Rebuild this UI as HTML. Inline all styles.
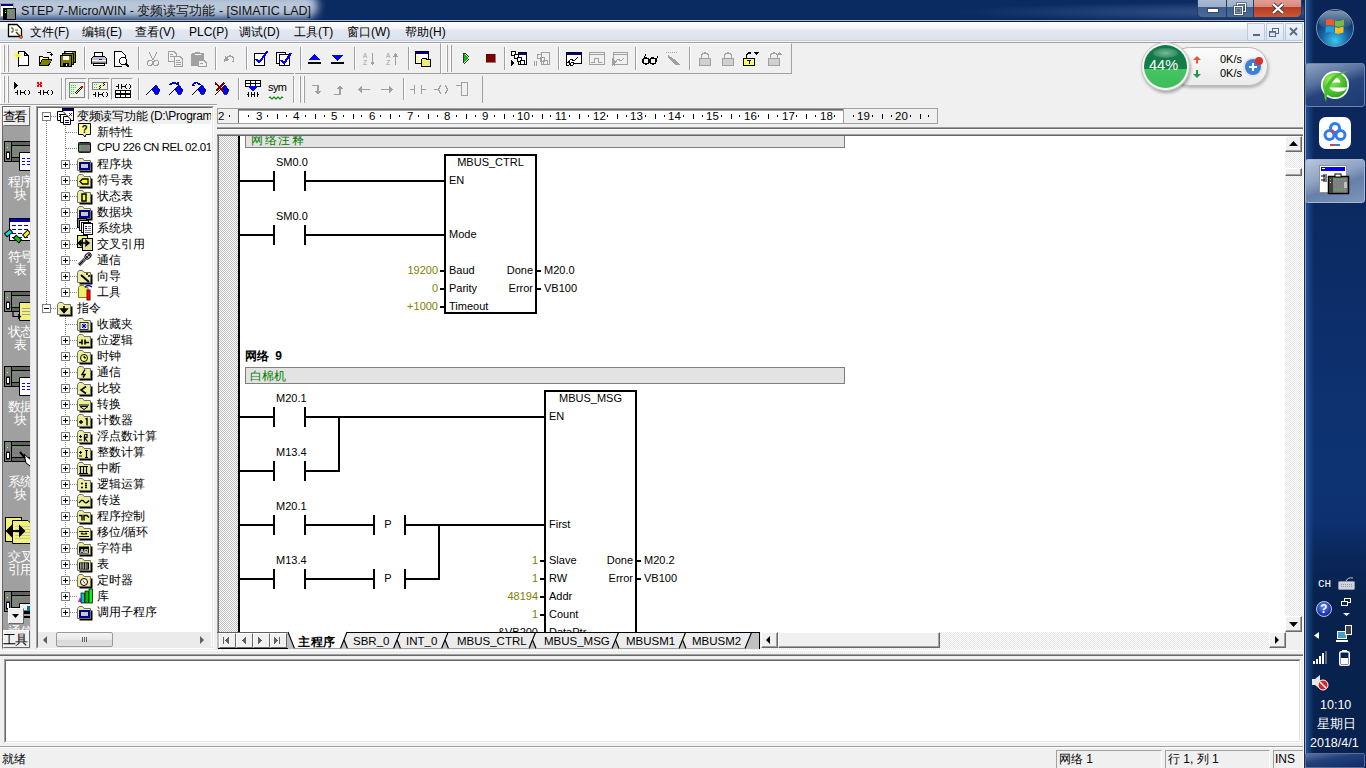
<!DOCTYPE html>
<html><head><meta charset="utf-8">
<style>
*{box-sizing:border-box}
html,body{margin:0;padding:0}
body{width:1366px;height:768px;overflow:hidden;position:relative;background:#f0f0f0;font-family:"Liberation Sans",sans-serif;font-size:12px;color:#000}
.a{position:absolute}
.t{position:absolute;white-space:nowrap;line-height:1}
svg{position:absolute;overflow:visible}
.lad{line-height:1}
.hatch{background:repeating-conic-gradient(#c0c0c0 0 25%,#ffffff 0 50%) 0 0/2px 2px}
</style></head><body>

<div class="a" style="left:0px;top:0px;width:1305px;height:20px;background:#0a2a62;"></div>
<div class="a" style="left:900px;top:0;width:420px;height:20px;background:radial-gradient(ellipse at 85% 60%,rgba(90,120,170,0.55),rgba(10,42,98,0) 60%)"></div>
<div class="a" style="left:-20px;top:-6px;width:338px;height:24px;border-radius:12px;background:#b9c7da;filter:blur(4px)"></div>
<div class="a" style="left:0px;top:20px;width:1305px;height:1px;background:#a2b5d2;"></div>
<div class="a" style="left:0px;top:21px;width:1305px;height:1px;background:#101b36;"></div>
<div class="t" style="left:21px;top:5px;font-size:12.5px;color:#111">STEP 7-Micro/WIN - 变频读写功能 - [SIMATIC LAD]</div>
<div class="a" style="left:0px;top:22px;width:1305px;height:18px;background:linear-gradient(#fdfdfe 0,#f3f5f9 35%,#e2e7f1 45%,#dde3ee 100%);"></div>
<div class="a" style="left:0px;top:40px;width:1305px;height:1px;background:#c8cfdc;"></div>
<div class="a" style="left:0px;top:41px;width:1305px;height:1px;background:#f4f4f4;"></div>
<div class="a" style="left:0px;top:42px;width:1305px;height:1px;background:#a0a0a0;"></div>
<div class="a" style="left:0px;top:43px;width:1305px;height:1px;background:#fff;"></div>
<div class="t" style="left:30px;top:26px;font-size:12px;">文件(F)</div>
<div class="t" style="left:82px;top:26px;font-size:12px;">编辑(E)</div>
<div class="t" style="left:135px;top:26px;font-size:12px;">查看(V)</div>
<div class="t" style="left:189px;top:26px;font-size:12px;">PLC(P)</div>
<div class="t" style="left:239px;top:26px;font-size:12px;">调试(D)</div>
<div class="t" style="left:294px;top:26px;font-size:12px;">工具(T)</div>
<div class="t" style="left:347px;top:26px;font-size:12px;">窗口(W)</div>
<div class="t" style="left:405px;top:26px;font-size:12px;">帮助(H)</div>
<div class="a" style="left:0px;top:43px;width:1305px;height:61px;background:#f0f0f0;"></div>
<div class="a" style="left:0px;top:43px;width:441px;height:31px;background:transparent;border-top:1px solid #fff;border-left:1px solid #fff;border-right:1px solid #a0a0a0;border-bottom:1px solid #a0a0a0"></div>
<div class="a" style="left:441px;top:43px;width:351px;height:31px;background:transparent;border-top:1px solid #fff;border-left:1px solid #fff;border-right:1px solid #a0a0a0;border-bottom:1px solid #a0a0a0"></div>
<div class="a" style="left:0px;top:73px;width:1px;height:31px;background:#fff;"></div>
<div class="a" style="left:293px;top:76px;width:1px;height:27px;background:#a0a0a0;"></div>
<div class="a" style="left:294px;top:73px;width:1px;height:31px;background:#fff;"></div>
<div class="a" style="left:482px;top:76px;width:1px;height:27px;background:#a0a0a0;"></div>
<div class="a" style="left:3px;top:45px;width:1px;height:27px;background:#fff;"></div>
<div class="a" style="left:4px;top:45px;width:1px;height:27px;background:#a0a0a0;"></div>
<div class="a" style="left:7px;top:45px;width:1px;height:27px;background:#fff;"></div>
<div class="a" style="left:8px;top:45px;width:1px;height:27px;background:#a0a0a0;"></div>
<div class="a" style="left:446px;top:45px;width:1px;height:27px;background:#fff;"></div>
<div class="a" style="left:447px;top:45px;width:1px;height:27px;background:#a0a0a0;"></div>
<div class="a" style="left:450px;top:45px;width:1px;height:27px;background:#fff;"></div>
<div class="a" style="left:451px;top:45px;width:1px;height:27px;background:#a0a0a0;"></div>
<div class="a" style="left:3px;top:76px;width:1px;height:27px;background:#fff;"></div>
<div class="a" style="left:4px;top:76px;width:1px;height:27px;background:#a0a0a0;"></div>
<div class="a" style="left:7px;top:76px;width:1px;height:27px;background:#fff;"></div>
<div class="a" style="left:8px;top:76px;width:1px;height:27px;background:#a0a0a0;"></div>
<div class="a" style="left:299px;top:76px;width:1px;height:27px;background:#fff;"></div>
<div class="a" style="left:300px;top:76px;width:1px;height:27px;background:#a0a0a0;"></div>
<div class="a" style="left:303px;top:76px;width:1px;height:27px;background:#fff;"></div>
<div class="a" style="left:304px;top:76px;width:1px;height:27px;background:#a0a0a0;"></div>
<svg style="left:14px;top:51px" width="16" height="16" viewBox="0 0 16 16" shape-rendering="crispEdges"><path d="M4 15.5 V0.5 H10 L14.5 5 V14.5 H3.5" fill="#fff" stroke="#000"/><path d="M10.5 0.5 V4.5 H14" fill="none" stroke="#000"/><path d="M0 4.5 H7 M3.5 1 V8 M1 2 L6 7 M6 2 L1 7" stroke="#ffff00" stroke-width="1"/><rect x="2" y="3" width="3" height="3" fill="#ffff00"/><rect x="3" y="4" width="1" height="1" fill="#c0c0c0"/></svg>
<svg style="left:38px;top:51px" width="16" height="16" viewBox="0 0 16 16" shape-rendering="crispEdges"><path d="M0.5 14.5 V4.5 H4 L5 5.5 H10.5 V7.5 H14.5 L11 14.5Z" fill="#000"/><path d="M1.5 13 V5.5 H4 L5 6.5 H9.5 V7.5 H4 Z" fill="#ffff80"/><path d="M2 13.5 L4.5 8.5 H14 L10.5 13.5Z" fill="#808000"/><path d="M8.5 2.5 Q11 0 13.5 2.5 V4" stroke="#000" fill="none"/><path d="M12 3 H15 L13.5 5Z" fill="#000"/></svg>
<svg style="left:60px;top:51px" width="16" height="16" viewBox="0 0 16 16" shape-rendering="crispEdges"><rect x="4.5" y="0.5" width="11" height="11" fill="#808000" stroke="#000"/><rect x="2.5" y="2.5" width="11" height="11" fill="#808000" stroke="#000"/><rect x="0.5" y="4.5" width="11" height="11" fill="#808000" stroke="#000"/><rect x="3" y="5" width="6" height="4" fill="#fff"/><rect x="3" y="12" width="6" height="3" fill="#000"/><rect x="6" y="13" width="1" height="2" fill="#fff"/><rect x="6" y="1" width="6" height="1" fill="#fff"/></svg>
<div class="a" style="left:84px;top:47px;width:1px;height:23px;background:#a0a0a0;"></div>
<div class="a" style="left:85px;top:47px;width:1px;height:23px;background:#fff;"></div>
<svg style="left:91px;top:51px" width="16" height="16" viewBox="0 0 16 16" shape-rendering="crispEdges"><path d="M3.5 5.5 V1.5 H11.5 V5.5" fill="#fff" stroke="#000"/><path d="M0.5 7.5 L2.5 5.5 H13.5 L15.5 7.5 V12.5 H0.5Z" fill="#c0c0c0" stroke="#000"/><path d="M1 9.5 H15" stroke="#fff"/><rect x="1" y="11" width="14" height="2" fill="#808080"/><rect x="2.5" y="12.5" width="11" height="2" fill="#fff" stroke="#000"/><rect x="8" y="8" width="3" height="1" fill="#0000ff"/></svg>
<svg style="left:114px;top:51px" width="16" height="16" viewBox="0 0 16 16" shape-rendering="crispEdges"><path d="M0.5 15.5 V0.5 H7.5 L11.5 4.5 V8" fill="#fff" stroke="#000"/><path d="M0.5 15.5 H8" stroke="#000"/><circle cx="9" cy="10" r="3.5" fill="#fff" stroke="#000"/><path d="M11.5 12.5 L15 16" stroke="#000" stroke-width="2"/></svg>
<div class="a" style="left:138px;top:47px;width:1px;height:23px;background:#a0a0a0;"></div>
<div class="a" style="left:139px;top:47px;width:1px;height:23px;background:#fff;"></div>
<svg style="left:145px;top:51px" width="16" height="16" viewBox="0 0 16 16" shape-rendering="crispEdges"><path d="M4 1 L8 9 M12 1 L8 9" stroke="#a0a0a0"/><circle cx="5" cy="12" r="2.5" fill="none" stroke="#a0a0a0"/><circle cx="11" cy="12" r="2.5" fill="none" stroke="#a0a0a0"/></svg>
<svg style="left:168px;top:51px" width="16" height="16" viewBox="0 0 16 16" shape-rendering="crispEdges"><path d="M0.5 0.5 H6 L8.5 3 V10.5 H0.5Z" fill="#f0f0f0" stroke="#a0a0a0"/><path d="M6.5 5.5 H12 L14.5 8 V15.5 H6.5Z" fill="#f0f0f0" stroke="#a0a0a0"/><path d="M2 3.5 H5 M2 5.5 H6 M8 9.5 H12 M8 11.5 H13 M8 13.5 H13" stroke="#a0a0a0"/></svg>
<svg style="left:191px;top:51px" width="16" height="16" viewBox="0 0 16 16" shape-rendering="crispEdges"><rect x="0.5" y="2.5" width="12" height="12" rx="1.5" fill="#a0a0a0" stroke="#a0a0a0"/><rect x="4" y="1" width="5" height="3" fill="#a0a0a0"/><rect x="4" y="3" width="6" height="1" fill="#fff"/><path d="M7.5 9.5 H13 L15.5 12 V15.5 H7.5Z" fill="#f0f0f0" stroke="#a0a0a0"/><path d="M9 12.5 H12" stroke="#a0a0a0"/></svg>
<div class="a" style="left:215px;top:47px;width:1px;height:23px;background:#a0a0a0;"></div>
<div class="a" style="left:216px;top:47px;width:1px;height:23px;background:#fff;"></div>
<svg style="left:222px;top:51px" width="16" height="16" viewBox="0 0 16 16" shape-rendering="crispEdges"><path d="M4 8 Q6 4 10 5.5 Q13 7 11 11" stroke="#a0a0a0" stroke-width="1.5" fill="none"/><path d="M2 11 L3 5 L7 9Z" fill="#a0a0a0"/></svg>
<div class="a" style="left:246px;top:47px;width:1px;height:23px;background:#a0a0a0;"></div>
<div class="a" style="left:247px;top:47px;width:1px;height:23px;background:#fff;"></div>
<svg style="left:253px;top:51px" width="16" height="16" viewBox="0 0 16 16" shape-rendering="crispEdges"><rect x="1.5" y="2.5" width="10" height="12" fill="#fff" stroke="#000" stroke-width="1"/><path d="M3 8 L6 11.5 L14.5 0.5" stroke="#0000ff" stroke-width="2" fill="none"/></svg>
<svg style="left:276px;top:51px" width="16" height="16" viewBox="0 0 16 16" shape-rendering="crispEdges"><rect x="0.5" y="1.5" width="9" height="11" fill="#fff" stroke="#000"/><rect x="3.5" y="3.5" width="10" height="11" fill="#fff" stroke="#000"/><path d="M5 9 L8 12.5 L15 2" stroke="#0000ff" stroke-width="2" fill="none"/></svg>
<div class="a" style="left:300px;top:47px;width:1px;height:23px;background:#a0a0a0;"></div>
<div class="a" style="left:301px;top:47px;width:1px;height:23px;background:#fff;"></div>
<svg style="left:307px;top:51px" width="16" height="16" viewBox="0 0 16 16" shape-rendering="crispEdges"><path d="M2 9 L7.5 3 L13 9Z" fill="#0000ff"/><rect x="1" y="11" width="13" height="2" fill="#000"/></svg>
<svg style="left:330px;top:51px" width="16" height="16" viewBox="0 0 16 16" shape-rendering="crispEdges"><path d="M2 4 L7.5 10 L13 4Z" fill="#0000ff"/><rect x="1" y="11" width="13" height="2" fill="#000"/></svg>
<div class="a" style="left:354px;top:47px;width:1px;height:23px;background:#a0a0a0;"></div>
<div class="a" style="left:355px;top:47px;width:1px;height:23px;background:#fff;"></div>
<svg style="left:361px;top:51px" width="16" height="16" viewBox="0 0 16 16" shape-rendering="crispEdges"><text x="4" y="6.5" font-size="7" fill="#a0a0a0" font-family="Liberation Mono" text-anchor="middle">A</text><text x="4" y="14" font-size="7" fill="#a0a0a0" font-family="Liberation Mono" text-anchor="middle">Z</text><path d="M11.5 2 V13" stroke="#a0a0a0" stroke-width="1.4"/><path d="M9 10.5 L11.5 14 L14 10.5Z" fill="#a0a0a0"/></svg>
<svg style="left:384px;top:51px" width="16" height="16" viewBox="0 0 16 16" shape-rendering="crispEdges"><text x="4" y="6.5" font-size="7" fill="#a0a0a0" font-family="Liberation Mono" text-anchor="middle">A</text><text x="4" y="14" font-size="7" fill="#a0a0a0" font-family="Liberation Mono" text-anchor="middle">Z</text><path d="M11.5 3 V14" stroke="#a0a0a0" stroke-width="1.4"/><path d="M9 5.5 L11.5 2 L14 5.5Z" fill="#a0a0a0"/></svg>
<div class="a" style="left:408px;top:47px;width:1px;height:23px;background:#a0a0a0;"></div>
<div class="a" style="left:409px;top:47px;width:1px;height:23px;background:#fff;"></div>
<svg style="left:415px;top:51px" width="16" height="16" viewBox="0 0 16 16" shape-rendering="crispEdges"><rect x="0.5" y="0.5" width="13" height="12" fill="#fff" stroke="#000"/><rect x="1" y="1" width="12" height="2" fill="#000080"/><rect x="2" y="4" width="2" height="8" fill="#ffff80"/><path d="M6.5 14.5 V8.5 L8 7 H11 L12 8.5 H15.5 V15.5 H6.5Z" fill="#eeee70" stroke="#000"/></svg>
<svg style="left:460px;top:51px" width="16" height="16" viewBox="0 0 16 16" shape-rendering="crispEdges"><path d="M3.5 2 V12 L9 7Z" fill="#00c000" stroke="#000" stroke-width="0.8"/></svg>
<svg style="left:483px;top:51px" width="16" height="16" viewBox="0 0 16 16" shape-rendering="crispEdges"><rect x="3" y="3" width="9" height="8" fill="#800000" stroke="#400000" stroke-width="0.5"/></svg>
<div class="a" style="left:504px;top:47px;width:1px;height:23px;background:#a0a0a0;"></div>
<div class="a" style="left:505px;top:47px;width:1px;height:23px;background:#fff;"></div>
<svg style="left:511px;top:51px" width="16" height="16" viewBox="0 0 16 16" shape-rendering="crispEdges"><rect x="7.5" y="1.5" width="8" height="12" fill="#fff" stroke="#000"/><rect x="8" y="2" width="7" height="2" fill="#000080"/><rect x="0.5" y="0.5" width="4" height="4" fill="#fff" stroke="#000"/><rect x="3.5" y="3.5" width="4" height="4" fill="#fff" stroke="#000"/><rect x="6.5" y="6.5" width="4" height="4" fill="#fff" stroke="#000"/><rect x="9.5" y="9.5" width="4" height="4" fill="#fff" stroke="#000"/><path d="M0 9 L3 12 L0 15Z" fill="#000"/></svg>
<svg style="left:534px;top:51px" width="16" height="16" viewBox="0 0 16 16" shape-rendering="crispEdges"><rect x="7.5" y="1.5" width="8" height="12" fill="none" stroke="#a0a0a0"/><rect x="3.5" y="3.5" width="4" height="4" fill="none" stroke="#a0a0a0"/><rect x="6.5" y="6.5" width="4" height="4" fill="none" stroke="#a0a0a0"/><rect x="9.5" y="9.5" width="4" height="4" fill="none" stroke="#a0a0a0"/><path d="M0.5 10 V15 M2.5 10 V15" stroke="#a0a0a0"/></svg>
<div class="a" style="left:558px;top:47px;width:1px;height:23px;background:#a0a0a0;"></div>
<div class="a" style="left:559px;top:47px;width:1px;height:23px;background:#fff;"></div>
<svg style="left:566px;top:51px" width="16" height="16" viewBox="0 0 16 16" shape-rendering="crispEdges"><rect x="0.5" y="1.5" width="15" height="11" fill="#fff" stroke="#000"/><rect x="1" y="2" width="14" height="2" fill="#000080"/><path d="M2 12 L5 8 L8 10 L12 6" stroke="#000" fill="none"/><circle cx="2" cy="13" r="1.5" fill="#fff" stroke="#000"/><circle cx="6" cy="13" r="1.5" fill="#fff" stroke="#000"/></svg>
<svg style="left:589px;top:51px" width="16" height="16" viewBox="0 0 16 16" shape-rendering="crispEdges"><rect x="0.5" y="1.5" width="15" height="12" fill="none" stroke="#a0a0a0"/><path d="M1 3.5 H15" stroke="#a0a0a0"/><path d="M2 11 H5 V7 H9 V11 H13" stroke="#a0a0a0" fill="none"/></svg>
<svg style="left:612px;top:51px" width="16" height="16" viewBox="0 0 16 16" shape-rendering="crispEdges"><rect x="1.5" y="1.5" width="14" height="12" fill="none" stroke="#a0a0a0"/><path d="M1 3.5 H15" stroke="#a0a0a0"/><path d="M3 12 L6 8 L9 10 L12 7" stroke="#a0a0a0" fill="none"/><path d="M0.5 7 V15 M2.5 9 V15" stroke="#a0a0a0"/></svg>
<div class="a" style="left:635px;top:47px;width:1px;height:23px;background:#a0a0a0;"></div>
<div class="a" style="left:636px;top:47px;width:1px;height:23px;background:#fff;"></div>
<svg style="left:642px;top:51px" width="16" height="16" viewBox="0 0 16 16" shape-rendering="crispEdges"><circle cx="4" cy="10" r="3" fill="none" stroke="#000" stroke-width="1.4"/><circle cx="11" cy="10" r="3" fill="none" stroke="#000" stroke-width="1.4"/><path d="M7 9 H8 M1 9 L4 3 M14 9 L16 5" stroke="#000" stroke-width="1.2"/></svg>
<svg style="left:665px;top:51px" width="16" height="16" viewBox="0 0 16 16" shape-rendering="crispEdges"><path d="M1 1.5 H12" stroke="#a0a0a0" stroke-dasharray="1 1"/><path d="M3 4 L12 10 L15 14 L10 14 L3 6Z" fill="#a0a0a0"/></svg>
<div class="a" style="left:689px;top:47px;width:1px;height:23px;background:#a0a0a0;"></div>
<div class="a" style="left:690px;top:47px;width:1px;height:23px;background:#fff;"></div>
<svg style="left:697px;top:51px" width="16" height="16" viewBox="0 0 16 16" shape-rendering="crispEdges"><path d="M4.5 7 V4 Q8 0 11.5 4 V7" stroke="#a0a0a0" stroke-width="1.5" fill="none"/><rect x="2.5" y="7.5" width="11" height="7" fill="#d0d0d0" stroke="#a0a0a0"/></svg>
<svg style="left:720px;top:51px" width="16" height="16" viewBox="0 0 16 16" shape-rendering="crispEdges"><path d="M4.5 7 V4 Q8 0 11.5 4 V7" stroke="#a0a0a0" stroke-width="1.5" fill="none"/><rect x="2.5" y="7.5" width="11" height="7" fill="#d0d0d0" stroke="#a0a0a0"/></svg>
<svg style="left:743px;top:51px" width="16" height="16" viewBox="0 0 16 16" shape-rendering="crispEdges"><path d="M3.5 7 V4 Q5 1 8 2" stroke="#000" stroke-width="1.5" fill="none"/><rect x="0.5" y="7.5" width="11" height="7" fill="#ffff60" stroke="#000"/><path d="M4 9.5 H8 M6 9.5 V13" stroke="#000"/><path d="M10 1 H16 L13 4Z" fill="#000"/></svg>
<svg style="left:766px;top:51px" width="16" height="16" viewBox="0 0 16 16" shape-rendering="crispEdges"><path d="M4.5 7 V4 Q8 0 11.5 4 V7" stroke="#a0a0a0" stroke-width="1.5" fill="none"/><rect x="2.5" y="7.5" width="11" height="7" fill="#d0d0d0" stroke="#a0a0a0"/><path d="M11 4 L13.5 1 L16 4Z" fill="#a0a0a0"/></svg>
<svg style="left:14px;top:82px" width="16" height="16" viewBox="0 0 16 16" shape-rendering="crispEdges"><path d="M0 0 V7 L4 3.5Z" fill="#000"/><g fill="#000"><rect x="1" y="10" width="2" height="1"/><rect x="3" y="8" width="1" height="5"/><rect x="6" y="8" width="1" height="5"/><rect x="7" y="10" width="3" height="1"/><rect x="10" y="9" width="1" height="3"/><rect x="11" y="8" width="1" height="1"/><rect x="11" y="12" width="1" height="1"/><rect x="15" y="9" width="1" height="3"/><rect x="14" y="8" width="1" height="1"/><rect x="14" y="12" width="1" height="1"/></g></svg>
<svg style="left:37px;top:82px" width="16" height="16" viewBox="0 0 16 16" shape-rendering="crispEdges"><g fill="#ff0000"><rect x="0" y="0" width="2" height="2"/><rect x="3" y="0" width="2" height="2"/><rect x="1" y="2" width="3" height="1"/><rect x="0" y="3" width="2" height="2"/><rect x="3" y="3" width="2" height="2"/></g><g fill="#000"><rect x="1" y="10" width="2" height="1"/><rect x="3" y="8" width="1" height="5"/><rect x="6" y="8" width="1" height="5"/><rect x="7" y="10" width="3" height="1"/><rect x="10" y="9" width="1" height="3"/><rect x="11" y="8" width="1" height="1"/><rect x="11" y="12" width="1" height="1"/><rect x="15" y="9" width="1" height="3"/><rect x="14" y="8" width="1" height="1"/><rect x="14" y="12" width="1" height="1"/></g></svg>
<div class="a" style="left:61px;top:78px;width:1px;height:22px;background:#a0a0a0;"></div>
<div class="a" style="left:62px;top:78px;width:1px;height:22px;background:#fff;"></div>
<div class="a" style="left:65px;top:78px;width:22px;height:22px;background:repeating-conic-gradient(#f8f8f8 0 25%,#e8e8e8 0 50%) 0 0/2px 2px;border:1px solid #a0a0a0;border-right-color:#fff;border-bottom-color:#fff"></div>
<div class="a" style="left:88px;top:78px;width:22px;height:22px;background:repeating-conic-gradient(#f8f8f8 0 25%,#e8e8e8 0 50%) 0 0/2px 2px;border:1px solid #a0a0a0;border-right-color:#fff;border-bottom-color:#fff"></div>
<div class="a" style="left:111px;top:78px;width:22px;height:22px;background:repeating-conic-gradient(#f8f8f8 0 25%,#e8e8e8 0 50%) 0 0/2px 2px;border:1px solid #a0a0a0;border-right-color:#fff;border-bottom-color:#fff"></div>
<svg style="left:69px;top:82px" width="16" height="16" viewBox="0 0 16 16" shape-rendering="crispEdges"><rect x="0.5" y="0.5" width="15" height="15" fill="#f0f0f0" stroke="#808080"/><path d="M2 3.5 H3 M4 3.5 H5 M6 3.5 H7 M2 5.5 H3 M4 5.5 H5 M6 5.5 H7 M2 7.5 H3 M4 7.5 H5 M2 9.5 H3 M4 9.5 H5 M2 11.5 H3 M4 11.5 H5 M6 11.5 H7" stroke="#00ff00"/><path d="M6 12 L13 5" stroke="#000" stroke-width="2.2"/><path d="M6 12 L13 5" stroke="#ffff00" stroke-width="1.2"/><rect x="12" y="4" width="2" height="2" fill="#ff0000"/></svg>
<svg style="left:92px;top:82px" width="16" height="18" viewBox="0 0 16 18" shape-rendering="crispEdges"><rect x="0.5" y="0.5" width="15" height="7" fill="#f0f0f0" stroke="#808080"/><path d="M2 2.5 H3 M4 2.5 H5 M2 5.5 H3 M4 5.5 H5" stroke="#00ff00"/><path d="M7 6 L13 1" stroke="#000" stroke-width="2"/><path d="M7 6 L13 1" stroke="#ffff00" stroke-width="1"/><g transform="translate(0,2)"><g fill="#000"><rect x="1" y="10" width="2" height="1"/><rect x="3" y="8" width="1" height="5"/><rect x="6" y="8" width="1" height="5"/><rect x="7" y="10" width="3" height="1"/><rect x="10" y="9" width="1" height="3"/><rect x="11" y="8" width="1" height="1"/><rect x="11" y="12" width="1" height="1"/><rect x="15" y="9" width="1" height="3"/><rect x="14" y="8" width="1" height="1"/><rect x="14" y="12" width="1" height="1"/></g></g></svg>
<svg style="left:115px;top:82px" width="16" height="16" viewBox="0 0 16 16" shape-rendering="crispEdges"><g transform="translate(0,-6)"><g fill="#000"><rect x="1" y="10" width="2" height="1"/><rect x="3" y="8" width="1" height="5"/><rect x="6" y="8" width="1" height="5"/><rect x="7" y="10" width="3" height="1"/><rect x="10" y="9" width="1" height="3"/><rect x="11" y="8" width="1" height="1"/><rect x="11" y="12" width="1" height="1"/><rect x="15" y="9" width="1" height="3"/><rect x="14" y="8" width="1" height="1"/><rect x="14" y="12" width="1" height="1"/></g></g><rect x="0.5" y="8.5" width="15" height="7" fill="#fff" stroke="#000" stroke-width="1.2"/><path d="M0 12 H16 M5.5 8 V16 M10.5 8 V16" stroke="#000" stroke-width="1.2"/></svg>
<div class="a" style="left:138px;top:78px;width:1px;height:22px;background:#a0a0a0;"></div>
<div class="a" style="left:139px;top:78px;width:1px;height:22px;background:#fff;"></div>
<svg style="left:145px;top:82px" width="17" height="15" viewBox="0 0 17 15" shape-rendering="crispEdges"><path d="M0.5 13.5 L11 3" stroke="#000" stroke-width="1.2"/><path d="M7 7 L11 3 L15 8 L13 12 L10 12Z" fill="#0000ff" stroke="#000080" stroke-width="0.8"/></svg>
<svg style="left:168px;top:82px" width="17" height="15" viewBox="0 0 17 15" shape-rendering="crispEdges"><path d="M0.5 13.5 L11 3" stroke="#000" stroke-width="1.2"/><path d="M7 7 L11 3 L15 8 L13 12 L10 12Z" fill="#0000ff" stroke="#000080" stroke-width="0.8"/><path d="M2 3 Q5 -1 9 2" stroke="#0000c0" stroke-width="1.5" fill="none"/><path d="M7.5 1 L10.5 4 L10.5 0Z" fill="#0000c0"/></svg>
<svg style="left:191px;top:82px" width="17" height="15" viewBox="0 0 17 15" shape-rendering="crispEdges"><path d="M0.5 13.5 L11 3" stroke="#000" stroke-width="1.2"/><path d="M7 7 L11 3 L15 8 L13 12 L10 12Z" fill="#0000ff" stroke="#000080" stroke-width="0.8"/><path d="M9 3 Q6 -1 2 2" stroke="#0000c0" stroke-width="1.5" fill="none"/><path d="M0.5 4 L4 3.5 L2 0.5Z" fill="#0000c0"/></svg>
<svg style="left:214px;top:82px" width="17" height="15" viewBox="0 0 17 15" shape-rendering="crispEdges"><path d="M0.5 13.5 L11 3" stroke="#000" stroke-width="1.2"/><path d="M7 7 L11 3 L15 8 L13 12 L10 12Z" fill="#0000ff" stroke="#000080" stroke-width="0.8"/><path d="M1 1 L10 9 M10 1 L2 9" stroke="#800000" stroke-width="1.6"/></svg>
<div class="a" style="left:238px;top:78px;width:1px;height:22px;background:#a0a0a0;"></div>
<div class="a" style="left:239px;top:78px;width:1px;height:22px;background:#fff;"></div>
<svg style="left:245px;top:80px" width="16" height="17" viewBox="0 0 16 17" shape-rendering="crispEdges"><rect x="0.5" y="0.5" width="15" height="6" fill="#fff" stroke="#000" stroke-width="1.2"/><path d="M0 3.5 H16 M5.5 0 V7 M10.5 0 V7" stroke="#000"/><path d="M2 6 H14 L8 11Z" fill="#0000ff"/><path d="M2 14.5 H3 M3.5 12 V17 M6.5 12 V17 M7 14.5 H8 M10 12 L9 14.5 L10 17 M12 12 L13 14.5 L12 17" stroke="#000" stroke-width="1.2" fill="none"/></svg>
<div class="t" style="left:268px;top:82px;font-size:11px;letter-spacing:-0.6px">sym</div>
<svg style="left:269px;top:96px" width="14" height="3"><path d="M0 2 Q1 0 2 2 T4 2 T6 2 T8 2 T10 2 T12 2 T14 2" stroke="#008000" stroke-width="1.2" fill="none"/></svg>
<svg style="left:312px;top:84px" width="12" height="12" viewBox="0 0 12 12" shape-rendering="crispEdges"><path d="M0 1.5 H6 V9" stroke="#a0a0a0" stroke-width="1.5" fill="none"/><path d="M2.5 7 L6 11 L9.5 7Z" fill="#a0a0a0"/></svg>
<svg style="left:334px;top:84px" width="14" height="12" viewBox="0 0 14 12" shape-rendering="crispEdges"><path d="M0 10.5 H6 V3" stroke="#a0a0a0" stroke-width="1.5" fill="none"/><path d="M2.5 5 L6 1 L9.5 5Z" fill="#a0a0a0"/></svg>
<svg style="left:358px;top:84px" width="13" height="12" viewBox="0 0 13 12" shape-rendering="crispEdges"><path d="M3 5.5 H12" stroke="#a0a0a0" stroke-width="1.5"/><path d="M0 5.5 L4 2 V9Z" fill="#a0a0a0"/></svg>
<svg style="left:381px;top:84px" width="13" height="12" viewBox="0 0 13 12" shape-rendering="crispEdges"><path d="M0 5.5 H9" stroke="#a0a0a0" stroke-width="1.5"/><path d="M12 5.5 L8 2 V9Z" fill="#a0a0a0"/></svg>
<div class="a" style="left:403px;top:78px;width:1px;height:22px;background:#a0a0a0;"></div>
<div class="a" style="left:404px;top:78px;width:1px;height:22px;background:#fff;"></div>
<svg style="left:410px;top:84px" width="16" height="12" viewBox="0 0 16 12" shape-rendering="crispEdges"><path d="M0 5.5 H4 M4.5 1 V10 M11.5 1 V10 M12 5.5 H16" stroke="#a0a0a0" stroke-width="1.3"/></svg>
<svg style="left:434px;top:84px" width="15" height="12" viewBox="0 0 15 12" shape-rendering="crispEdges"><path d="M0 5.5 H4 M7 1 L4.5 5.5 L7 10 M11 1 L13.5 5.5 L11 10" stroke="#a0a0a0" stroke-width="1.3" fill="none"/></svg>
<svg style="left:456px;top:82px" width="13" height="15" viewBox="0 0 13 15" shape-rendering="crispEdges"><path d="M0 3.5 H5" stroke="#a0a0a0" stroke-width="1.3"/><rect x="5.5" y="0.5" width="6" height="13" fill="none" stroke="#a0a0a0" stroke-width="1.2"/></svg>
<div class="a" style="left:0px;top:104px;width:217px;height:1px;background:#a0a0a0;"></div>
<div class="a" style="left:0px;top:105px;width:217px;height:1px;background:#fff;"></div>
<div class="a" style="left:2px;top:106px;width:29px;height:543px;border:1px solid #696969;border-right-color:#e3e3e3;border-bottom-color:#e3e3e3;background:#a0a0a0"></div>
<div class="a" style="left:3px;top:107px;width:27px;height:19px;background:#f0f0f0;border-right:1px solid #696969;border-bottom:1px solid #696969;border-top:1px solid #fff;border-left:1px solid #fff"></div>
<div class="t" style="left:3px;top:110px;font-size:13px;letter-spacing:-2.5px;color:#000">查看</div>
<div class="a" style="left:36px;top:106px;width:178px;height:543px;border:1px solid #a0a0a0;border-right-color:#fff;border-bottom-color:#fff;"></div>
<div class="a" style="left:37px;top:107px;width:176px;height:541px;border:1px solid #696969;border-right-color:#e3e3e3;border-bottom-color:#e3e3e3;background:#fff"></div>
<div class="a" style="left:3px;top:126px;width:27px;height:522px;overflow:hidden"><div class="a" style="left:-3px;top:-126px;width:400px;height:768px">
<svg style="left:4px;top:141px" width="32" height="32" viewBox="0 0 32 32"><rect x="0.5" y="0.5" width="30" height="20" fill="#808080" stroke="#000"/><rect x="1" y="1" width="6" height="19" fill="#808080"/><path d="M7.5 1 V20" stroke="#000"/><rect x="2" y="10.5" width="4" height="8" fill="#000"/><rect x="3" y="12" width="2" height="5" fill="#fff"/><rect x="3" y="3" width="1" height="1" fill="#00ff00"/><rect x="3" y="6" width="1" height="1" fill="#ffff00"/><rect x="8" y="1" width="22" height="3" fill="#606060"/><rect x="8" y="16" width="22" height="4" fill="#606060"/><path d="M8 16.5 H30" stroke="#000"/><path d="M8 4.5 H30" stroke="#000"/><path d="M10 6.5 H18" stroke="#00ff00" stroke-dasharray="1 2"/><path d="M10 14.5 H14" stroke="#00ff00" stroke-dasharray="1 2"/><path d="M15.5 11.5 H26 L30 15 V29.5 H15.5Z" fill="#fff" stroke="#000"/><path d="M18 17.5 H21 M23 17.5 H26 M18 20.5 H21 M23 20.5 H26 M18 23.5 H21 M23 23.5 H26" stroke="#0000ff"/></svg>
<svg style="left:4px;top:216px" width="32" height="32" viewBox="0 0 32 32"><rect x="5.5" y="2.5" width="26" height="22" fill="#fff" stroke="#000"/><rect x="6" y="3" width="25" height="3" fill="#0000c0"/><path d="M8 9.5 H12 M14 9.5 H18 M20 9.5 H24 M26 9.5 H30 M8 13.5 H12 M14 13.5 H18 M20 13.5 H24 M26 13.5 H30 M8 17.5 H12 M14 17.5 H18 M20 17.5 H24 M26 17.5 H30 M8 21.5 H12 M14 21.5 H18 M20 21.5 H24 M26 21.5 H30" stroke="#0000c0"/><rect x="1" y="15" width="7" height="4" transform="rotate(-40 4.5 17)" fill="#00e0e0" stroke="#000"/><rect x="10" y="21" width="7" height="4" transform="rotate(40 13.5 23)" fill="#00d000" stroke="#000"/><rect x="19" y="16" width="7" height="4" transform="rotate(-45 22.5 18)" fill="#f0f000" stroke="#000"/></svg>
<svg style="left:4px;top:291px" width="32" height="32" viewBox="0 0 32 32"><rect x="0.5" y="0.5" width="30" height="20" fill="#808080" stroke="#000"/><rect x="1" y="1" width="6" height="19" fill="#808080"/><path d="M7.5 1 V20" stroke="#000"/><rect x="2" y="10.5" width="4" height="8" fill="#000"/><rect x="3" y="12" width="2" height="5" fill="#fff"/><rect x="3" y="3" width="1" height="1" fill="#00ff00"/><rect x="3" y="6" width="1" height="1" fill="#ffff00"/><rect x="8" y="1" width="22" height="3" fill="#606060"/><rect x="8" y="16" width="22" height="4" fill="#606060"/><path d="M8 16.5 H30" stroke="#000"/><path d="M8 4.5 H30" stroke="#000"/><path d="M10 6.5 H18" stroke="#00ff00" stroke-dasharray="1 2"/><path d="M10 14.5 H14" stroke="#00ff00" stroke-dasharray="1 2"/><path d="M15.5 11.5 H26 L30 15 V29.5 H15.5Z" fill="#f2f27a" stroke="#000"/><path d="M18 17.5 H26 M18 20.5 H26 M18 23.5 H26" stroke="#a0a0a0"/><path d="M9 21 V25.5 H16 M14 23.5 L16.5 25.5 L14 27.5" stroke="#000" stroke-width="1.2" fill="none"/></svg>
<svg style="left:4px;top:366px" width="32" height="32" viewBox="0 0 32 32"><rect x="0.5" y="0.5" width="30" height="20" fill="#808080" stroke="#000"/><rect x="1" y="1" width="6" height="19" fill="#808080"/><path d="M7.5 1 V20" stroke="#000"/><rect x="2" y="10.5" width="4" height="8" fill="#000"/><rect x="3" y="12" width="2" height="5" fill="#fff"/><rect x="3" y="3" width="1" height="1" fill="#00ff00"/><rect x="3" y="6" width="1" height="1" fill="#ffff00"/><rect x="8" y="1" width="22" height="3" fill="#606060"/><rect x="8" y="16" width="22" height="4" fill="#606060"/><path d="M8 16.5 H30" stroke="#000"/><path d="M8 4.5 H30" stroke="#000"/><path d="M10 6.5 H18" stroke="#00ff00" stroke-dasharray="1 2"/><path d="M10 14.5 H14" stroke="#00ff00" stroke-dasharray="1 2"/><path d="M15.5 11.5 H26 L30 15 V29.5 H15.5Z" fill="#fff" stroke="#000"/><path d="M18 17.5 H21 M23 17.5 H26 M18 20.5 H21 M23 20.5 H26 M18 23.5 H21 M23 23.5 H26" stroke="#0000ff"/></svg>
<svg style="left:4px;top:441px" width="32" height="32" viewBox="0 0 32 32"><rect x="0.5" y="0.5" width="30" height="20" fill="#808080" stroke="#000"/><rect x="1" y="1" width="6" height="19" fill="#808080"/><path d="M7.5 1 V20" stroke="#000"/><rect x="2" y="10.5" width="4" height="8" fill="#000"/><rect x="3" y="12" width="2" height="5" fill="#fff"/><rect x="3" y="3" width="1" height="1" fill="#00ff00"/><rect x="3" y="6" width="1" height="1" fill="#ffff00"/><rect x="8" y="1" width="22" height="3" fill="#606060"/><rect x="8" y="16" width="22" height="4" fill="#606060"/><path d="M8 16.5 H30" stroke="#000"/><path d="M8 4.5 H30" stroke="#000"/><path d="M10 6.5 H18" stroke="#00ff00" stroke-dasharray="1 2"/><path d="M10 14.5 H14" stroke="#00ff00" stroke-dasharray="1 2"/><path d="M20 13 L28 20 L26 25 L22 22Z" fill="#fff" stroke="#000"/><path d="M16 11 L21 17" stroke="#000" stroke-width="2"/><path d="M27 24 L31 30" stroke="#d07000" stroke-width="1.5"/></svg>
<svg style="left:4px;top:516px" width="32" height="32" viewBox="0 0 32 32"><rect x="1.5" y="1.5" width="16" height="24" fill="#f2f27a" stroke="#000"/><path d="M8.5 4.5 H24 L28 8.5 V27.5 H8.5Z" fill="#f2f27a" stroke="#000"/><path d="M11 10.5 H26 M11 13.5 H26 M11 16.5 H26 M11 19.5 H26 M11 22.5 H26" stroke="#c8c8a0"/><path d="M3 15 H20 M3 15 L7 11 V19Z M20 15 L16 11 V19Z" stroke="#000" stroke-width="2" fill="#000"/></svg>
<svg style="left:4px;top:591px" width="32" height="32" viewBox="0 0 32 32"><rect x="0.5" y="0.5" width="30" height="20" fill="#808080" stroke="#000"/><rect x="1" y="1" width="6" height="19" fill="#808080"/><path d="M7.5 1 V20" stroke="#000"/><rect x="2" y="10.5" width="4" height="8" fill="#000"/><rect x="3" y="12" width="2" height="5" fill="#fff"/><rect x="3" y="3" width="1" height="1" fill="#00ff00"/><rect x="3" y="6" width="1" height="1" fill="#ffff00"/><rect x="8" y="1" width="22" height="3" fill="#606060"/><rect x="8" y="16" width="22" height="4" fill="#606060"/><path d="M8 16.5 H30" stroke="#000"/><path d="M8 4.5 H30" stroke="#000"/><path d="M10 6.5 H18" stroke="#00ff00" stroke-dasharray="1 2"/><path d="M10 14.5 H14" stroke="#00ff00" stroke-dasharray="1 2"/><path d="M15.5 12.5 H31 V20 H15.5Z" fill="#f0f0f0" stroke="#000"/><rect x="23" y="15" width="8" height="5" fill="#008080"/><path d="M6 22 H30 M6 26 H30" stroke="#000" stroke-width="2"/></svg>
<div class="t" style="left:-20px;width:80px;text-align:center;top:175px;font-size:13px;color:#fff;line-height:13px;letter-spacing:-0.5px">程序<br>块</div>
<div class="t" style="left:-20px;width:80px;text-align:center;top:250px;font-size:13px;color:#fff;line-height:13px;letter-spacing:-0.5px">符号<br>表</div>
<div class="t" style="left:-20px;width:80px;text-align:center;top:325px;font-size:13px;color:#fff;line-height:13px;letter-spacing:-0.5px">状态<br>表</div>
<div class="t" style="left:-20px;width:80px;text-align:center;top:400px;font-size:13px;color:#fff;line-height:13px;letter-spacing:-0.5px">数据<br>块</div>
<div class="t" style="left:-20px;width:80px;text-align:center;top:475px;font-size:13px;color:#fff;line-height:13px;letter-spacing:-0.5px">系统<br>块</div>
<div class="t" style="left:-20px;width:80px;text-align:center;top:550px;font-size:13px;color:#fff;line-height:13px;letter-spacing:-0.5px">交叉<br>引用</div>
<div class="t" style="left:-20px;width:80px;text-align:center;top:625px;font-size:13px;color:#fff;line-height:13px;letter-spacing:-0.5px">通信<br></div>
</div></div>
<div class="a" style="left:8px;top:608px;width:16px;height:16px;background:#f0f0f0;border:1px solid #fff;border-right-color:#696969;border-bottom-color:#696969"></div>
<svg style="left:12px;top:614px" width="8" height="4"><path d="M0 0 H7 L3.5 4Z" fill="#000"/></svg>
<div class="a" style="left:3px;top:630px;width:27px;height:18px;background:#f0f0f0;border:1px solid #fff;border-right-color:#696969;border-bottom-color:#696969"></div>
<div class="t" style="left:3px;top:633px;font-size:13px;letter-spacing:-1.5px">工具</div>
<div class="a" style="left:38px;top:108px;width:173px;height:523px;overflow:hidden"><div class="a" style="left:-38px;top:-108px;width:400px;height:768px">
<div class="a" style="left:46px;top:121px;width:1px;height:183px;background:repeating-linear-gradient(180deg,#808080 0 1px,transparent 1px 2px);"></div>
<div class="a" style="left:65px;top:124px;width:1px;height:168px;background:repeating-linear-gradient(180deg,#808080 0 1px,transparent 1px 2px);"></div>
<div class="a" style="left:65px;top:316px;width:1px;height:296px;background:repeating-linear-gradient(180deg,#808080 0 1px,transparent 1px 2px);"></div>
<div class="a" style="left:42px;top:112px;width:9px;height:9px;background:#fff;border:1px solid #808080"></div>
<div class="a" style="left:44px;top:116px;width:5px;height:1px;background:#000;"></div>
<div class="a" style="left:51px;top:116px;width:6px;height:1px;background:repeating-linear-gradient(90deg,#808080 0 1px,transparent 1px 2px);"></div>
<svg style="left:57px;top:108px" width="17" height="17" viewBox="0 0 17 17"><rect x="5.5" y="0.5" width="11" height="12" fill="#fff" stroke="#000"/><rect x="6" y="1" width="10" height="2" fill="#000080"/><path d="M12 5 L15 8 M15 5 L12 8" stroke="#000" stroke-width="0.8"/><path d="M0.5 3.5 H6 L8 5.5 V12.5 H0.5Z" fill="#fff" stroke="#000"/><path d="M2 6.5 H5 M2 8.5 H6" stroke="#000080"/><path d="M3.5 6.5 H9 L11 8.5 V14.5 H3.5Z" fill="#fff" stroke="#000"/><path d="M6.5 8.5 H11 L13.5 11 V16.5 H6.5Z" fill="#fff" stroke="#000"/><path d="M8 12.5 H12 M8 14.5 H12" stroke="#000080"/></svg>
<div class="a" style="left:76px;top:108px;width:140px;height:16px;background:#f0f0f0;"></div>
<div class="t" style="left:77px;top:110px;font-size:12px;letter-spacing:-0.3px">变频读写功能 (D:\Program</div>
<div class="a" style="left:66px;top:132px;width:11px;height:1px;background:repeating-linear-gradient(90deg,#808080 0 1px,transparent 1px 2px);"></div>
<svg style="left:77px;top:122px" width="16" height="16" viewBox="0 0 16 16"><path d="M1.5 1.5 H13.5 V12.5 H9 L8 15 L6 12.5 H1.5Z" fill="#ffff80" stroke="#000"/><text x="7.5" y="11" font-size="10" font-weight="bold" fill="#000080" text-anchor="middle" font-family="Liberation Sans">?</text></svg>
<div class="t" style="left:97px;top:126px;font-size:12px;">新特性</div>
<div class="a" style="left:66px;top:148px;width:11px;height:1px;background:repeating-linear-gradient(90deg,#808080 0 1px,transparent 1px 2px);"></div>
<svg style="left:77px;top:140px" width="16" height="16" viewBox="0 0 16 16"><rect x="1.5" y="2.5" width="12" height="10" rx="1" fill="#808080" stroke="#000"/><rect x="2" y="3" width="11" height="2" fill="#404040"/><rect x="2" y="6" width="2" height="1" fill="#00ff00"/><rect x="2" y="9" width="2" height="1" fill="#00ff00"/><rect x="2" y="11" width="11" height="1.5" fill="#404040"/></svg>
<div class="t" style="left:97px;top:142px;font-size:11.5px;letter-spacing:-0.45px">CPU 226 CN REL 02.01</div>
<div class="a" style="left:61px;top:160px;width:9px;height:9px;background:#fff;border:1px solid #808080"></div>
<div class="a" style="left:63px;top:164px;width:5px;height:1px;background:#000;"></div>
<div class="a" style="left:65px;top:162px;width:1px;height:5px;background:#000;"></div>
<div class="a" style="left:70px;top:164px;width:7px;height:1px;background:repeating-linear-gradient(90deg,#808080 0 1px,transparent 1px 2px);"></div>
<svg style="left:77px;top:158px" width="16" height="16" viewBox="0 0 16 16"><path d="M1.5 13.5 V3.5 L3 2 H6 L7 3.5 H14.5 V13.5Z" fill="#000" transform="translate(1,1)"/><path d="M0.5 12.5 V2.5 L2 0.5 H5.5 L7 2.5 H13.5 V12.5Z" fill="#efee98" stroke="#707070"/><rect x="3" y="5" width="9" height="6" fill="#c8c8c8" stroke="#000090" stroke-width="2"/></svg>
<div class="t" style="left:97px;top:158px;font-size:12px;">程序块</div>
<div class="a" style="left:61px;top:176px;width:9px;height:9px;background:#fff;border:1px solid #808080"></div>
<div class="a" style="left:63px;top:180px;width:5px;height:1px;background:#000;"></div>
<div class="a" style="left:65px;top:178px;width:1px;height:5px;background:#000;"></div>
<div class="a" style="left:70px;top:180px;width:7px;height:1px;background:repeating-linear-gradient(90deg,#808080 0 1px,transparent 1px 2px);"></div>
<svg style="left:77px;top:174px" width="16" height="16" viewBox="0 0 16 16"><path d="M1.5 13.5 V3.5 L3 2 H6 L7 3.5 H14.5 V13.5Z" fill="#000" transform="translate(1,1)"/><path d="M0.5 12.5 V2.5 L2 0.5 H5.5 L7 2.5 H13.5 V12.5Z" fill="#efee98" stroke="#707070"/><g transform="translate(-1,-1.5)"><path d="M4 9 L6.5 6.5 H12 V11.5 H6.5Z" fill="#ffff00" stroke="#000" stroke-width="1.3"/></g></svg>
<div class="t" style="left:97px;top:174px;font-size:12px;">符号表</div>
<div class="a" style="left:61px;top:192px;width:9px;height:9px;background:#fff;border:1px solid #808080"></div>
<div class="a" style="left:63px;top:196px;width:5px;height:1px;background:#000;"></div>
<div class="a" style="left:65px;top:194px;width:1px;height:5px;background:#000;"></div>
<div class="a" style="left:70px;top:196px;width:7px;height:1px;background:repeating-linear-gradient(90deg,#808080 0 1px,transparent 1px 2px);"></div>
<svg style="left:77px;top:190px" width="16" height="16" viewBox="0 0 16 16"><path d="M1.5 13.5 V3.5 L3 2 H6 L7 3.5 H14.5 V13.5Z" fill="#000" transform="translate(1,1)"/><path d="M0.5 12.5 V2.5 L2 0.5 H5.5 L7 2.5 H13.5 V12.5Z" fill="#efee98" stroke="#707070"/><g transform="translate(-1,-1.5)"><rect x="6" y="5.5" width="4" height="7" fill="#ffff00" stroke="#000" stroke-width="1.5"/></g></svg>
<div class="t" style="left:97px;top:190px;font-size:12px;">状态表</div>
<div class="a" style="left:61px;top:208px;width:9px;height:9px;background:#fff;border:1px solid #808080"></div>
<div class="a" style="left:63px;top:212px;width:5px;height:1px;background:#000;"></div>
<div class="a" style="left:65px;top:210px;width:1px;height:5px;background:#000;"></div>
<div class="a" style="left:70px;top:212px;width:7px;height:1px;background:repeating-linear-gradient(90deg,#808080 0 1px,transparent 1px 2px);"></div>
<svg style="left:77px;top:206px" width="16" height="16" viewBox="0 0 16 16"><path d="M1.5 13.5 V3.5 L3 2 H6 L7 3.5 H14.5 V13.5Z" fill="#000" transform="translate(1,1)"/><path d="M0.5 12.5 V2.5 L2 0.5 H5.5 L7 2.5 H13.5 V12.5Z" fill="#efee98" stroke="#707070"/><rect x="3" y="5" width="9" height="6" fill="#c8c8c8" stroke="#000090" stroke-width="2"/></svg>
<div class="t" style="left:97px;top:206px;font-size:12px;">数据块</div>
<div class="a" style="left:61px;top:224px;width:9px;height:9px;background:#fff;border:1px solid #808080"></div>
<div class="a" style="left:63px;top:228px;width:5px;height:1px;background:#000;"></div>
<div class="a" style="left:65px;top:226px;width:1px;height:5px;background:#000;"></div>
<div class="a" style="left:70px;top:228px;width:7px;height:1px;background:repeating-linear-gradient(90deg,#808080 0 1px,transparent 1px 2px);"></div>
<svg style="left:77px;top:218px" width="17" height="17" viewBox="0 0 17 17"><rect x="0.5" y="0.5" width="9" height="9" fill="#808080" stroke="#000"/><rect x="2.5" y="2.5" width="9" height="10" fill="#fff" stroke="#000"/><rect x="4.5" y="4.5" width="9" height="10" fill="#fff" stroke="#000"/><rect x="6.5" y="5.5" width="9" height="11" fill="#fff" stroke="#000"/><path d="M8 8.5 H10 M8 10.5 H10" stroke="#0000ff"/><path d="M11 8.5 H14 M11 10.5 H14 M8 12.5 H14 M8 14.5 H14" stroke="#808080"/></svg>
<div class="t" style="left:97px;top:222px;font-size:12px;">系统块</div>
<div class="a" style="left:61px;top:240px;width:9px;height:9px;background:#fff;border:1px solid #808080"></div>
<div class="a" style="left:63px;top:244px;width:5px;height:1px;background:#000;"></div>
<div class="a" style="left:65px;top:242px;width:1px;height:5px;background:#000;"></div>
<div class="a" style="left:70px;top:244px;width:7px;height:1px;background:repeating-linear-gradient(90deg,#808080 0 1px,transparent 1px 2px);"></div>
<svg style="left:77px;top:235px" width="16" height="16" viewBox="0 0 16 16"><rect x="0.5" y="0.5" width="10" height="12" fill="#eeee70" stroke="#000"/><rect x="5.5" y="3.5" width="10" height="12" fill="#e0e0a0" stroke="#000"/><path d="M1 8 H12 M1 8 L4 5.5 V10.5Z M12 8 L9 5.5 V10.5Z" stroke="#000" stroke-width="1.5" fill="#000"/></svg>
<div class="t" style="left:97px;top:238px;font-size:12px;">交叉引用</div>
<div class="a" style="left:61px;top:256px;width:9px;height:9px;background:#fff;border:1px solid #808080"></div>
<div class="a" style="left:63px;top:260px;width:5px;height:1px;background:#000;"></div>
<div class="a" style="left:65px;top:258px;width:1px;height:5px;background:#000;"></div>
<div class="a" style="left:70px;top:260px;width:7px;height:1px;background:repeating-linear-gradient(90deg,#808080 0 1px,transparent 1px 2px);"></div>
<svg style="left:77px;top:251px" width="16" height="16" viewBox="0 0 16 16"><path d="M2 14 L8 8" stroke="#606060" stroke-width="3.5"/><ellipse cx="11" cy="5" rx="3.5" ry="2.5" transform="rotate(-45 11 5)" fill="#c0c0c0" stroke="#000"/><circle cx="10" cy="6" r="1" fill="#000"/><circle cx="12" cy="4" r="1" fill="#000"/><path d="M2 14 L6 10" stroke="#000" stroke-width="1"/></svg>
<div class="t" style="left:97px;top:254px;font-size:12px;">通信</div>
<div class="a" style="left:61px;top:272px;width:9px;height:9px;background:#fff;border:1px solid #808080"></div>
<div class="a" style="left:63px;top:276px;width:5px;height:1px;background:#000;"></div>
<div class="a" style="left:65px;top:274px;width:1px;height:5px;background:#000;"></div>
<div class="a" style="left:70px;top:276px;width:7px;height:1px;background:repeating-linear-gradient(90deg,#808080 0 1px,transparent 1px 2px);"></div>
<svg style="left:77px;top:270px" width="16" height="16" viewBox="0 0 16 16"><path d="M1.5 13.5 V3.5 L3 2 H6 L7 3.5 H14.5 V13.5Z" fill="#000" transform="translate(1,1)"/><path d="M0.5 12.5 V2.5 L2 0.5 H5.5 L7 2.5 H13.5 V12.5Z" fill="#efee98" stroke="#707070"/><path d="M4 5 L12 12" stroke="#000" stroke-width="2"/><circle cx="10" cy="4" r="1" fill="#000"/><circle cx="12" cy="6" r="1" fill="#000"/></svg>
<div class="t" style="left:97px;top:270px;font-size:12px;">向导</div>
<div class="a" style="left:61px;top:288px;width:9px;height:9px;background:#fff;border:1px solid #808080"></div>
<div class="a" style="left:63px;top:292px;width:5px;height:1px;background:#000;"></div>
<div class="a" style="left:65px;top:290px;width:1px;height:5px;background:#000;"></div>
<div class="a" style="left:70px;top:292px;width:7px;height:1px;background:repeating-linear-gradient(90deg,#808080 0 1px,transparent 1px 2px);"></div>
<svg style="left:77px;top:284px" width="16" height="18" viewBox="0 0 16 18"><path d="M1.5 13.5 V3.5 L3 1.5 H6.5 L8 3.5 H11 V13.5Z" fill="#eeee70" stroke="#808000"/><path d="M8 3 Q11 0 15 3" stroke="#0000c0" stroke-width="1.5" fill="none"/><rect x="10" y="6" width="3" height="10" fill="#ff0000" stroke="#800000"/></svg>
<div class="t" style="left:97px;top:286px;font-size:12px;">工具</div>
<div class="a" style="left:42px;top:304px;width:9px;height:9px;background:#fff;border:1px solid #808080"></div>
<div class="a" style="left:44px;top:308px;width:5px;height:1px;background:#000;"></div>
<div class="a" style="left:51px;top:308px;width:6px;height:1px;background:repeating-linear-gradient(90deg,#808080 0 1px,transparent 1px 2px);"></div>
<svg style="left:57px;top:302px" width="16" height="16" viewBox="0 0 16 16"><path d="M1.5 13.5 V3.5 L3 2 H6 L7 3.5 H14.5 V13.5Z" fill="#000" transform="translate(1,1)"/><path d="M0.5 12.5 V2.5 L2 0.5 H5.5 L7 2.5 H13.5 V12.5Z" fill="#efee98" stroke="#707070"/><g transform="translate(-1,-1.5)"><path d="M8 5.5 V11 M5 8.5 L8 12 L11 8.5Z" stroke="#000" stroke-width="1.6" fill="#000"/></g></svg>
<div class="t" style="left:77px;top:302px;font-size:12px;">指令</div>
<div class="a" style="left:66px;top:324px;width:11px;height:1px;background:repeating-linear-gradient(90deg,#808080 0 1px,transparent 1px 2px);"></div>
<svg style="left:77px;top:318px" width="16" height="16" viewBox="0 0 16 16"><path d="M1.5 13.5 V3.5 L3 2 H6 L7 3.5 H14.5 V13.5Z" fill="#000" transform="translate(1,1)"/><path d="M0.5 12.5 V2.5 L2 0.5 H5.5 L7 2.5 H13.5 V12.5Z" fill="#efee98" stroke="#707070"/><g transform="translate(-1,-1.5)"><rect x="4" y="6" width="8" height="7" fill="#fff" stroke="#000" stroke-width="0.8"/><path d="M8 7 V12 M5.5 9.5 H10.5 M6 7.5 L10 11.5 M10 7.5 L6 11.5" stroke="#0000c0" stroke-width="1"/></g></svg>
<div class="t" style="left:97px;top:318px;font-size:12px;">收藏夹</div>
<div class="a" style="left:61px;top:336px;width:9px;height:9px;background:#fff;border:1px solid #808080"></div>
<div class="a" style="left:63px;top:340px;width:5px;height:1px;background:#000;"></div>
<div class="a" style="left:65px;top:338px;width:1px;height:5px;background:#000;"></div>
<div class="a" style="left:70px;top:340px;width:7px;height:1px;background:repeating-linear-gradient(90deg,#808080 0 1px,transparent 1px 2px);"></div>
<svg style="left:77px;top:334px" width="16" height="16" viewBox="0 0 16 16"><path d="M1.5 13.5 V3.5 L3 2 H6 L7 3.5 H14.5 V13.5Z" fill="#000" transform="translate(1,1)"/><path d="M0.5 12.5 V2.5 L2 0.5 H5.5 L7 2.5 H13.5 V12.5Z" fill="#efee98" stroke="#707070"/><g transform="translate(-1,-1.5)"><path d="M3 10 H6 M6 7 V12 M9 7 V12 M9 10 H13" stroke="#000" stroke-width="1.6"/></g></svg>
<div class="t" style="left:97px;top:334px;font-size:12px;">位逻辑</div>
<div class="a" style="left:61px;top:352px;width:9px;height:9px;background:#fff;border:1px solid #808080"></div>
<div class="a" style="left:63px;top:356px;width:5px;height:1px;background:#000;"></div>
<div class="a" style="left:65px;top:354px;width:1px;height:5px;background:#000;"></div>
<div class="a" style="left:70px;top:356px;width:7px;height:1px;background:repeating-linear-gradient(90deg,#808080 0 1px,transparent 1px 2px);"></div>
<svg style="left:77px;top:350px" width="16" height="16" viewBox="0 0 16 16"><path d="M1.5 13.5 V3.5 L3 2 H6 L7 3.5 H14.5 V13.5Z" fill="#000" transform="translate(1,1)"/><path d="M0.5 12.5 V2.5 L2 0.5 H5.5 L7 2.5 H13.5 V12.5Z" fill="#efee98" stroke="#707070"/><g transform="translate(-1,-1.5)"><circle cx="8" cy="9.5" r="3.5" fill="#ffff80" stroke="#000"/><path d="M8 7.5 V9.5 H10" stroke="#000"/></g></svg>
<div class="t" style="left:97px;top:350px;font-size:12px;">时钟</div>
<div class="a" style="left:61px;top:368px;width:9px;height:9px;background:#fff;border:1px solid #808080"></div>
<div class="a" style="left:63px;top:372px;width:5px;height:1px;background:#000;"></div>
<div class="a" style="left:65px;top:370px;width:1px;height:5px;background:#000;"></div>
<div class="a" style="left:70px;top:372px;width:7px;height:1px;background:repeating-linear-gradient(90deg,#808080 0 1px,transparent 1px 2px);"></div>
<svg style="left:77px;top:366px" width="16" height="16" viewBox="0 0 16 16"><path d="M1.5 13.5 V3.5 L3 2 H6 L7 3.5 H14.5 V13.5Z" fill="#000" transform="translate(1,1)"/><path d="M0.5 12.5 V2.5 L2 0.5 H5.5 L7 2.5 H13.5 V12.5Z" fill="#efee98" stroke="#707070"/><g transform="translate(-1,-1.5)"><path d="M9 5 L6 10 H9 L7 13" stroke="#000" stroke-width="1.4" fill="none"/></g></svg>
<div class="t" style="left:97px;top:366px;font-size:12px;">通信</div>
<div class="a" style="left:61px;top:384px;width:9px;height:9px;background:#fff;border:1px solid #808080"></div>
<div class="a" style="left:63px;top:388px;width:5px;height:1px;background:#000;"></div>
<div class="a" style="left:65px;top:386px;width:1px;height:5px;background:#000;"></div>
<div class="a" style="left:70px;top:388px;width:7px;height:1px;background:repeating-linear-gradient(90deg,#808080 0 1px,transparent 1px 2px);"></div>
<svg style="left:77px;top:382px" width="16" height="16" viewBox="0 0 16 16"><path d="M1.5 13.5 V3.5 L3 2 H6 L7 3.5 H14.5 V13.5Z" fill="#000" transform="translate(1,1)"/><path d="M0.5 12.5 V2.5 L2 0.5 H5.5 L7 2.5 H13.5 V12.5Z" fill="#efee98" stroke="#707070"/><g transform="translate(-1,-1.5)"><path d="M10 6 L5 9.5 L10 13" stroke="#000" stroke-width="1.6" fill="none"/></g></svg>
<div class="t" style="left:97px;top:382px;font-size:12px;">比较</div>
<div class="a" style="left:61px;top:400px;width:9px;height:9px;background:#fff;border:1px solid #808080"></div>
<div class="a" style="left:63px;top:404px;width:5px;height:1px;background:#000;"></div>
<div class="a" style="left:65px;top:402px;width:1px;height:5px;background:#000;"></div>
<div class="a" style="left:70px;top:404px;width:7px;height:1px;background:repeating-linear-gradient(90deg,#808080 0 1px,transparent 1px 2px);"></div>
<svg style="left:77px;top:398px" width="16" height="16" viewBox="0 0 16 16"><path d="M1.5 13.5 V3.5 L3 2 H6 L7 3.5 H14.5 V13.5Z" fill="#000" transform="translate(1,1)"/><path d="M0.5 12.5 V2.5 L2 0.5 H5.5 L7 2.5 H13.5 V12.5Z" fill="#efee98" stroke="#707070"/><g transform="translate(-1,-1.5)"><path d="M3 8.5 H13 M4 10 L8 13 L12 10Z" stroke="#000" stroke-width="1" fill="none"/></g></svg>
<div class="t" style="left:97px;top:398px;font-size:12px;">转换</div>
<div class="a" style="left:61px;top:416px;width:9px;height:9px;background:#fff;border:1px solid #808080"></div>
<div class="a" style="left:63px;top:420px;width:5px;height:1px;background:#000;"></div>
<div class="a" style="left:65px;top:418px;width:1px;height:5px;background:#000;"></div>
<div class="a" style="left:70px;top:420px;width:7px;height:1px;background:repeating-linear-gradient(90deg,#808080 0 1px,transparent 1px 2px);"></div>
<svg style="left:77px;top:414px" width="16" height="16" viewBox="0 0 16 16"><path d="M1.5 13.5 V3.5 L3 2 H6 L7 3.5 H14.5 V13.5Z" fill="#000" transform="translate(1,1)"/><path d="M0.5 12.5 V2.5 L2 0.5 H5.5 L7 2.5 H13.5 V12.5Z" fill="#efee98" stroke="#707070"/><g transform="translate(-1,-1.5)"><path d="M3 9.5 H7 M5 7.5 V11.5 M9.5 6.5 L11 6 V13" stroke="#000" stroke-width="1.4" fill="none"/></g></svg>
<div class="t" style="left:97px;top:414px;font-size:12px;">计数器</div>
<div class="a" style="left:61px;top:432px;width:9px;height:9px;background:#fff;border:1px solid #808080"></div>
<div class="a" style="left:63px;top:436px;width:5px;height:1px;background:#000;"></div>
<div class="a" style="left:65px;top:434px;width:1px;height:5px;background:#000;"></div>
<div class="a" style="left:70px;top:436px;width:7px;height:1px;background:repeating-linear-gradient(90deg,#808080 0 1px,transparent 1px 2px);"></div>
<svg style="left:77px;top:430px" width="16" height="16" viewBox="0 0 16 16"><path d="M1.5 13.5 V3.5 L3 2 H6 L7 3.5 H14.5 V13.5Z" fill="#000" transform="translate(1,1)"/><path d="M0.5 12.5 V2.5 L2 0.5 H5.5 L7 2.5 H13.5 V12.5Z" fill="#efee98" stroke="#707070"/><g transform="translate(-1,-1.5)"><path d="M3 8 H6 M4.5 6.5 V9.5 M3 11.5 H6 M8.5 6 V13 M8.5 6 H11 V9 H8.5 L11.5 13" stroke="#000" stroke-width="1.2" fill="none"/></g></svg>
<div class="t" style="left:97px;top:430px;font-size:12px;">浮点数计算</div>
<div class="a" style="left:61px;top:448px;width:9px;height:9px;background:#fff;border:1px solid #808080"></div>
<div class="a" style="left:63px;top:452px;width:5px;height:1px;background:#000;"></div>
<div class="a" style="left:65px;top:450px;width:1px;height:5px;background:#000;"></div>
<div class="a" style="left:70px;top:452px;width:7px;height:1px;background:repeating-linear-gradient(90deg,#808080 0 1px,transparent 1px 2px);"></div>
<svg style="left:77px;top:446px" width="16" height="16" viewBox="0 0 16 16"><path d="M1.5 13.5 V3.5 L3 2 H6 L7 3.5 H14.5 V13.5Z" fill="#000" transform="translate(1,1)"/><path d="M0.5 12.5 V2.5 L2 0.5 H5.5 L7 2.5 H13.5 V12.5Z" fill="#efee98" stroke="#707070"/><g transform="translate(-1,-1.5)"><path d="M3 8 H6 M4.5 6.5 V9.5 M3 11.5 H6 M9 6 H12 M10.5 6 V13 M9 13 H12" stroke="#000" stroke-width="1.2" fill="none"/></g></svg>
<div class="t" style="left:97px;top:446px;font-size:12px;">整数计算</div>
<div class="a" style="left:61px;top:464px;width:9px;height:9px;background:#fff;border:1px solid #808080"></div>
<div class="a" style="left:63px;top:468px;width:5px;height:1px;background:#000;"></div>
<div class="a" style="left:65px;top:466px;width:1px;height:5px;background:#000;"></div>
<div class="a" style="left:70px;top:468px;width:7px;height:1px;background:repeating-linear-gradient(90deg,#808080 0 1px,transparent 1px 2px);"></div>
<svg style="left:77px;top:462px" width="16" height="16" viewBox="0 0 16 16"><path d="M1.5 13.5 V3.5 L3 2 H6 L7 3.5 H14.5 V13.5Z" fill="#000" transform="translate(1,1)"/><path d="M0.5 12.5 V2.5 L2 0.5 H5.5 L7 2.5 H13.5 V12.5Z" fill="#efee98" stroke="#707070"/><g transform="translate(-1,-1.5)"><path d="M4.5 6 V13 M7.5 6 V13 M10.5 6 V13 M3 6 H12 M3 13 H12" stroke="#000" stroke-width="1.2" fill="none"/></g></svg>
<div class="t" style="left:97px;top:462px;font-size:12px;">中断</div>
<div class="a" style="left:61px;top:480px;width:9px;height:9px;background:#fff;border:1px solid #808080"></div>
<div class="a" style="left:63px;top:484px;width:5px;height:1px;background:#000;"></div>
<div class="a" style="left:65px;top:482px;width:1px;height:5px;background:#000;"></div>
<div class="a" style="left:70px;top:484px;width:7px;height:1px;background:repeating-linear-gradient(90deg,#808080 0 1px,transparent 1px 2px);"></div>
<svg style="left:77px;top:478px" width="16" height="16" viewBox="0 0 16 16"><path d="M1.5 13.5 V3.5 L3 2 H6 L7 3.5 H14.5 V13.5Z" fill="#000" transform="translate(1,1)"/><path d="M0.5 12.5 V2.5 L2 0.5 H5.5 L7 2.5 H13.5 V12.5Z" fill="#efee98" stroke="#707070"/><g transform="translate(-1,-1.5)"><path d="M5 7 H7 M5 11 H7 M9 7 H11 M9 9 H11 M9 11 H11" stroke="#000" stroke-width="1.5" fill="none"/></g></svg>
<div class="t" style="left:97px;top:478px;font-size:12px;">逻辑运算</div>
<div class="a" style="left:61px;top:496px;width:9px;height:9px;background:#fff;border:1px solid #808080"></div>
<div class="a" style="left:63px;top:500px;width:5px;height:1px;background:#000;"></div>
<div class="a" style="left:65px;top:498px;width:1px;height:5px;background:#000;"></div>
<div class="a" style="left:70px;top:500px;width:7px;height:1px;background:repeating-linear-gradient(90deg,#808080 0 1px,transparent 1px 2px);"></div>
<svg style="left:77px;top:494px" width="16" height="16" viewBox="0 0 16 16"><path d="M1.5 13.5 V3.5 L3 2 H6 L7 3.5 H14.5 V13.5Z" fill="#000" transform="translate(1,1)"/><path d="M0.5 12.5 V2.5 L2 0.5 H5.5 L7 2.5 H13.5 V12.5Z" fill="#efee98" stroke="#707070"/><g transform="translate(-1,-1.5)"><path d="M3 10.5 Q6 6 8 9 T13 8" stroke="#000" stroke-width="1.3" fill="none"/></g></svg>
<div class="t" style="left:97px;top:494px;font-size:12px;">传送</div>
<div class="a" style="left:61px;top:512px;width:9px;height:9px;background:#fff;border:1px solid #808080"></div>
<div class="a" style="left:63px;top:516px;width:5px;height:1px;background:#000;"></div>
<div class="a" style="left:65px;top:514px;width:1px;height:5px;background:#000;"></div>
<div class="a" style="left:70px;top:516px;width:7px;height:1px;background:repeating-linear-gradient(90deg,#808080 0 1px,transparent 1px 2px);"></div>
<svg style="left:77px;top:510px" width="16" height="16" viewBox="0 0 16 16"><path d="M1.5 13.5 V3.5 L3 2 H6 L7 3.5 H14.5 V13.5Z" fill="#000" transform="translate(1,1)"/><path d="M0.5 12.5 V2.5 L2 0.5 H5.5 L7 2.5 H13.5 V12.5Z" fill="#efee98" stroke="#707070"/><g transform="translate(-1,-1.5)"><path d="M3 7 H6 V12 M8 12 V7 H11 L13 9" stroke="#000" stroke-width="1.4" fill="none"/></g></svg>
<div class="t" style="left:97px;top:510px;font-size:12px;">程序控制</div>
<div class="a" style="left:61px;top:528px;width:9px;height:9px;background:#fff;border:1px solid #808080"></div>
<div class="a" style="left:63px;top:532px;width:5px;height:1px;background:#000;"></div>
<div class="a" style="left:65px;top:530px;width:1px;height:5px;background:#000;"></div>
<div class="a" style="left:70px;top:532px;width:7px;height:1px;background:repeating-linear-gradient(90deg,#808080 0 1px,transparent 1px 2px);"></div>
<svg style="left:77px;top:526px" width="16" height="16" viewBox="0 0 16 16"><path d="M1.5 13.5 V3.5 L3 2 H6 L7 3.5 H14.5 V13.5Z" fill="#000" transform="translate(1,1)"/><path d="M0.5 12.5 V2.5 L2 0.5 H5.5 L7 2.5 H13.5 V12.5Z" fill="#efee98" stroke="#707070"/><g transform="translate(-1,-1.5)"><path d="M3 7 H13 M3 12 H13 M5 9.5 H11 M5 9.5 L6.5 8.3 M11 9.5 L9.5 8.3" stroke="#000" stroke-width="1.2" fill="none"/></g></svg>
<div class="t" style="left:97px;top:526px;font-size:12px;">移位/循环</div>
<div class="a" style="left:61px;top:544px;width:9px;height:9px;background:#fff;border:1px solid #808080"></div>
<div class="a" style="left:63px;top:548px;width:5px;height:1px;background:#000;"></div>
<div class="a" style="left:65px;top:546px;width:1px;height:5px;background:#000;"></div>
<div class="a" style="left:70px;top:548px;width:7px;height:1px;background:repeating-linear-gradient(90deg,#808080 0 1px,transparent 1px 2px);"></div>
<svg style="left:77px;top:542px" width="16" height="16" viewBox="0 0 16 16"><path d="M1.5 13.5 V3.5 L3 2 H6 L7 3.5 H14.5 V13.5Z" fill="#000" transform="translate(1,1)"/><path d="M0.5 12.5 V2.5 L2 0.5 H5.5 L7 2.5 H13.5 V12.5Z" fill="#efee98" stroke="#707070"/><g transform="translate(-1,-1.5)"><rect x="3" y="6" width="10" height="7" fill="#000"/><text x="8" y="12" font-size="6" fill="#fff" text-anchor="middle" font-family="Liberation Sans" font-weight="bold">AB</text></g></svg>
<div class="t" style="left:97px;top:542px;font-size:12px;">字符串</div>
<div class="a" style="left:61px;top:560px;width:9px;height:9px;background:#fff;border:1px solid #808080"></div>
<div class="a" style="left:63px;top:564px;width:5px;height:1px;background:#000;"></div>
<div class="a" style="left:65px;top:562px;width:1px;height:5px;background:#000;"></div>
<div class="a" style="left:70px;top:564px;width:7px;height:1px;background:repeating-linear-gradient(90deg,#808080 0 1px,transparent 1px 2px);"></div>
<svg style="left:77px;top:558px" width="16" height="16" viewBox="0 0 16 16"><path d="M1.5 13.5 V3.5 L3 2 H6 L7 3.5 H14.5 V13.5Z" fill="#000" transform="translate(1,1)"/><path d="M0.5 12.5 V2.5 L2 0.5 H5.5 L7 2.5 H13.5 V12.5Z" fill="#efee98" stroke="#707070"/><g transform="translate(-1,-1.5)"><rect x="3.5" y="6.5" width="9" height="6" fill="#fff" stroke="#000"/><path d="M3 8.5 H13 M3 10.5 H13 M6 6 V13 M8.5 6 V13 M11 6 V13" stroke="#000" stroke-width="0.8"/></g></svg>
<div class="t" style="left:97px;top:558px;font-size:12px;">表</div>
<div class="a" style="left:61px;top:576px;width:9px;height:9px;background:#fff;border:1px solid #808080"></div>
<div class="a" style="left:63px;top:580px;width:5px;height:1px;background:#000;"></div>
<div class="a" style="left:65px;top:578px;width:1px;height:5px;background:#000;"></div>
<div class="a" style="left:70px;top:580px;width:7px;height:1px;background:repeating-linear-gradient(90deg,#808080 0 1px,transparent 1px 2px);"></div>
<svg style="left:77px;top:574px" width="16" height="16" viewBox="0 0 16 16"><path d="M1.5 13.5 V3.5 L3 2 H6 L7 3.5 H14.5 V13.5Z" fill="#000" transform="translate(1,1)"/><path d="M0.5 12.5 V2.5 L2 0.5 H5.5 L7 2.5 H13.5 V12.5Z" fill="#efee98" stroke="#707070"/><g transform="translate(-1,-1.5)"><circle cx="8" cy="9.5" r="3.5" fill="#fff" stroke="#000"/><path d="M7 8 L9 11" stroke="#c00000"/></g></svg>
<div class="t" style="left:97px;top:574px;font-size:12px;">定时器</div>
<div class="a" style="left:61px;top:592px;width:9px;height:9px;background:#fff;border:1px solid #808080"></div>
<div class="a" style="left:63px;top:596px;width:5px;height:1px;background:#000;"></div>
<div class="a" style="left:65px;top:594px;width:1px;height:5px;background:#000;"></div>
<div class="a" style="left:70px;top:596px;width:7px;height:1px;background:repeating-linear-gradient(90deg,#808080 0 1px,transparent 1px 2px);"></div>
<svg style="left:77px;top:588px" width="17" height="16" viewBox="0 0 17 16"><path d="M1 14 L3 9 L5 14Z" fill="#ff00ff"/><rect x="4" y="5" width="3.5" height="10" fill="#00c0c0" stroke="#000" stroke-width="0.7"/><rect x="8" y="3" width="3.5" height="12" fill="#00c000" stroke="#000" stroke-width="0.7"/><rect x="12" y="1" width="3.5" height="14" fill="#00ff00" stroke="#000" stroke-width="0.7"/></svg>
<div class="t" style="left:97px;top:590px;font-size:12px;">库</div>
<div class="a" style="left:61px;top:608px;width:9px;height:9px;background:#fff;border:1px solid #808080"></div>
<div class="a" style="left:63px;top:612px;width:5px;height:1px;background:#000;"></div>
<div class="a" style="left:65px;top:610px;width:1px;height:5px;background:#000;"></div>
<div class="a" style="left:70px;top:612px;width:7px;height:1px;background:repeating-linear-gradient(90deg,#808080 0 1px,transparent 1px 2px);"></div>
<svg style="left:77px;top:606px" width="16" height="16" viewBox="0 0 16 16"><path d="M1.5 13.5 V3.5 L3 2 H6 L7 3.5 H14.5 V13.5Z" fill="#000" transform="translate(1,1)"/><path d="M0.5 12.5 V2.5 L2 0.5 H5.5 L7 2.5 H13.5 V12.5Z" fill="#efee98" stroke="#707070"/><rect x="3" y="5" width="9" height="6" fill="#c8c8c8" stroke="#000090" stroke-width="2"/></svg>
<div class="t" style="left:97px;top:606px;font-size:12px;">调用子程序</div>
</div></div>
<div class="a" style="left:38px;top:632px;width:173px;height:16px;background:#ebebeb;"></div>
<svg style="left:43px;top:636px" width="5" height="9"><path d="M4 0 V8 L0 4Z" fill="#606060"/></svg>
<svg style="left:200px;top:636px" width="5" height="9"><path d="M0 0 V8 L4 4Z" fill="#606060"/></svg>
<div class="a" style="left:56px;top:632px;width:57px;height:15px;background:linear-gradient(#f4f4f4,#e8e8e8 50%,#d8d8d8 51%,#e0e0e0);border:1px solid #9a9a9a;border-radius:2px"></div>
<div class="a" style="left:82px;top:637px;width:1px;height:5px;background:#606060;"></div>
<div class="a" style="left:84px;top:637px;width:1px;height:5px;background:#606060;"></div>
<div class="a" style="left:86px;top:637px;width:1px;height:5px;background:#606060;"></div>
<div class="a" style="left:217px;top:108px;width:721px;height:16px;background:#f0f0f0;border:1px solid #a0a0a0"></div>
<div class="a" style="left:238px;top:108px;width:605px;height:15px;background:#fff;border-left:1px solid #696969;border-top:2px solid #696969;box-shadow:inset 0 1px 0 #a0a0a0"></div>
<div class="a" style="left:238px;top:108px;width:605px;height:1px;background:#a0a0a0;"></div>
<div class="a" style="left:843px;top:109px;width:1px;height:14px;background:#a0a0a0;"></div>
<div class="a" style="left:217px;top:127px;width:1086px;height:1px;background:#a0a0a0;"></div>
<div class="a" style="left:217px;top:128px;width:1086px;height:1px;background:#696969;"></div>
<div class="a" style="left:217px;top:129px;width:1086px;height:1px;background:#fff;"></div>
<div class="a" style="left:217px;top:134px;width:1086px;height:1px;background:#a0a0a0;"></div>
<div class="a" style="left:217px;top:135px;width:1086px;height:1px;background:#696969;"></div>
<div class="a" style="left:217px;top:136px;width:1px;height:497px;background:#a0a0a0;"></div>
<div class="a" style="left:218px;top:136px;width:1px;height:497px;background:#696969;"></div>
<div class="a hatch" style="left:219px;top:136px;width:19px;height:496px"></div>
<div class="a" style="left:238px;top:136px;width:2px;height:496px;background:#000;"></div>
<div class="a" style="left:240px;top:136px;width:1045px;height:496px;background:#fff;"></div>
<div class="t" style="left:218px;top:111px;font-size:11.5px;letter-spacing:0px">2</div>
<div class="t" style="left:256px;top:111px;font-size:11.5px;letter-spacing:0px">3</div>
<div class="t" style="left:293px;top:111px;font-size:11.5px;letter-spacing:0px">4</div>
<div class="t" style="left:331px;top:111px;font-size:11.5px;letter-spacing:0px">5</div>
<div class="t" style="left:369px;top:111px;font-size:11.5px;letter-spacing:0px">6</div>
<div class="t" style="left:407px;top:111px;font-size:11.5px;letter-spacing:0px">7</div>
<div class="t" style="left:444px;top:111px;font-size:11.5px;letter-spacing:0px">8</div>
<div class="t" style="left:482px;top:111px;font-size:11.5px;letter-spacing:0px">9</div>
<div class="t" style="left:517px;top:111px;font-size:11.5px;letter-spacing:0px">10</div>
<div class="t" style="left:555px;top:111px;font-size:11.5px;letter-spacing:0px">11</div>
<div class="t" style="left:593px;top:111px;font-size:11.5px;letter-spacing:0px">12</div>
<div class="t" style="left:630px;top:111px;font-size:11.5px;letter-spacing:0px">13</div>
<div class="t" style="left:668px;top:111px;font-size:11.5px;letter-spacing:0px">14</div>
<div class="t" style="left:706px;top:111px;font-size:11.5px;letter-spacing:0px">15</div>
<div class="t" style="left:744px;top:111px;font-size:11.5px;letter-spacing:0px">16</div>
<div class="t" style="left:782px;top:111px;font-size:11.5px;letter-spacing:0px">17</div>
<div class="t" style="left:820px;top:111px;font-size:11.5px;letter-spacing:0px">18</div>
<div class="t" style="left:857px;top:111px;font-size:11.5px;letter-spacing:0px">19</div>
<div class="t" style="left:895px;top:111px;font-size:11.5px;letter-spacing:0px">20</div>
<div class="a" style="left:229px;top:115px;width:1px;height:2px;background:#000;"></div>
<div class="a" style="left:248px;top:115px;width:1px;height:2px;background:#000;"></div>
<div class="a" style="left:267px;top:115px;width:1px;height:2px;background:#000;"></div>
<div class="a" style="left:277px;top:114px;width:1px;height:5px;background:#000;"></div>
<div class="a" style="left:286px;top:115px;width:1px;height:2px;background:#000;"></div>
<div class="a" style="left:305px;top:115px;width:1px;height:2px;background:#000;"></div>
<div class="a" style="left:315px;top:114px;width:1px;height:5px;background:#000;"></div>
<div class="a" style="left:324px;top:115px;width:1px;height:2px;background:#000;"></div>
<div class="a" style="left:343px;top:115px;width:1px;height:2px;background:#000;"></div>
<div class="a" style="left:353px;top:114px;width:1px;height:5px;background:#000;"></div>
<div class="a" style="left:361px;top:115px;width:1px;height:2px;background:#000;"></div>
<div class="a" style="left:380px;top:115px;width:1px;height:2px;background:#000;"></div>
<div class="a" style="left:390px;top:114px;width:1px;height:5px;background:#000;"></div>
<div class="a" style="left:399px;top:115px;width:1px;height:2px;background:#000;"></div>
<div class="a" style="left:418px;top:115px;width:1px;height:2px;background:#000;"></div>
<div class="a" style="left:428px;top:114px;width:1px;height:5px;background:#000;"></div>
<div class="a" style="left:437px;top:115px;width:1px;height:2px;background:#000;"></div>
<div class="a" style="left:456px;top:115px;width:1px;height:2px;background:#000;"></div>
<div class="a" style="left:466px;top:114px;width:1px;height:5px;background:#000;"></div>
<div class="a" style="left:475px;top:115px;width:1px;height:2px;background:#000;"></div>
<div class="a" style="left:494px;top:115px;width:1px;height:2px;background:#000;"></div>
<div class="a" style="left:504px;top:114px;width:1px;height:5px;background:#000;"></div>
<div class="a" style="left:513px;top:115px;width:1px;height:2px;background:#000;"></div>
<div class="a" style="left:532px;top:115px;width:1px;height:2px;background:#000;"></div>
<div class="a" style="left:542px;top:114px;width:1px;height:5px;background:#000;"></div>
<div class="a" style="left:550px;top:115px;width:1px;height:2px;background:#000;"></div>
<div class="a" style="left:569px;top:115px;width:1px;height:2px;background:#000;"></div>
<div class="a" style="left:579px;top:114px;width:1px;height:5px;background:#000;"></div>
<div class="a" style="left:588px;top:115px;width:1px;height:2px;background:#000;"></div>
<div class="a" style="left:607px;top:115px;width:1px;height:2px;background:#000;"></div>
<div class="a" style="left:617px;top:114px;width:1px;height:5px;background:#000;"></div>
<div class="a" style="left:626px;top:115px;width:1px;height:2px;background:#000;"></div>
<div class="a" style="left:645px;top:115px;width:1px;height:2px;background:#000;"></div>
<div class="a" style="left:655px;top:114px;width:1px;height:5px;background:#000;"></div>
<div class="a" style="left:664px;top:115px;width:1px;height:2px;background:#000;"></div>
<div class="a" style="left:683px;top:115px;width:1px;height:2px;background:#000;"></div>
<div class="a" style="left:693px;top:114px;width:1px;height:5px;background:#000;"></div>
<div class="a" style="left:702px;top:115px;width:1px;height:2px;background:#000;"></div>
<div class="a" style="left:721px;top:115px;width:1px;height:2px;background:#000;"></div>
<div class="a" style="left:731px;top:114px;width:1px;height:5px;background:#000;"></div>
<div class="a" style="left:739px;top:115px;width:1px;height:2px;background:#000;"></div>
<div class="a" style="left:758px;top:115px;width:1px;height:2px;background:#000;"></div>
<div class="a" style="left:768px;top:114px;width:1px;height:5px;background:#000;"></div>
<div class="a" style="left:777px;top:115px;width:1px;height:2px;background:#000;"></div>
<div class="a" style="left:796px;top:115px;width:1px;height:2px;background:#000;"></div>
<div class="a" style="left:806px;top:114px;width:1px;height:5px;background:#000;"></div>
<div class="a" style="left:815px;top:115px;width:1px;height:2px;background:#000;"></div>
<div class="a" style="left:834px;top:115px;width:1px;height:2px;background:#000;"></div>
<div class="a" style="left:853px;top:115px;width:1px;height:2px;background:#000;"></div>
<div class="a" style="left:872px;top:115px;width:1px;height:2px;background:#000;"></div>
<div class="a" style="left:882px;top:114px;width:1px;height:5px;background:#000;"></div>
<div class="a" style="left:891px;top:115px;width:1px;height:2px;background:#000;"></div>
<div class="a" style="left:910px;top:115px;width:1px;height:2px;background:#000;"></div>
<div class="a" style="left:920px;top:114px;width:1px;height:5px;background:#000;"></div>
<div class="a" style="left:928px;top:115px;width:1px;height:2px;background:#000;"></div>
<div class="a" style="left:240px;top:136px;width:1045px;height:496px;overflow:hidden">
<div class="a" style="left:-240px;top:-136px;width:1366px;height:768px">
<div class="a" style="left:245px;top:120px;width:600px;height:28px;background:#e3e3e3;border:1px solid #808080;border-top:none"></div>
<div class="t lad" style="left:251px;top:133.5px;color:#008000;font-size:12px;letter-spacing:1.6px">网络注释</div>
<div class="a" style="left:240px;top:180px;width:33px;height:2px;background:#000;"></div>
<div class="a" style="left:273px;top:171px;width:2px;height:20px;background:#000;"></div>
<div class="a" style="left:304px;top:171px;width:2px;height:20px;background:#000;"></div>
<div class="t lad" style="left:276px;top:156.5px;color:#000;font-size:11px;">SM0.0</div>
<div class="a" style="left:306px;top:180px;width:138px;height:2px;background:#000;"></div>
<div class="a" style="left:240px;top:234px;width:33px;height:2px;background:#000;"></div>
<div class="a" style="left:273px;top:225px;width:2px;height:20px;background:#000;"></div>
<div class="a" style="left:304px;top:225px;width:2px;height:20px;background:#000;"></div>
<div class="t lad" style="left:276px;top:210.5px;color:#000;font-size:11px;">SM0.0</div>
<div class="a" style="left:306px;top:234px;width:138px;height:2px;background:#000;"></div>
<div class="a" style="left:444px;top:154px;width:93px;height:160px;background:transparent;border:2px solid #000"></div>
<div class="t lad" style="left:390.5px;width:200px;text-align:center;top:156.5px;color:#000;font-size:11px;">MBUS_CTRL</div>
<div class="t lad" style="left:449px;top:174.5px;color:#000;font-size:11px;">EN</div>
<div class="t lad" style="left:449px;top:228.5px;color:#000;font-size:11px;">Mode</div>
<div class="t lad" style="left:449px;top:264.5px;color:#000;font-size:11px;">Baud</div>
<div class="a" style="left:440px;top:270px;width:4px;height:2px;background:#000;"></div>
<div class="t lad" style="right:928px;top:264.5px;color:#808000;font-size:11px;">19200</div>
<div class="t lad" style="left:449px;top:282.5px;color:#000;font-size:11px;">Parity</div>
<div class="a" style="left:440px;top:288px;width:4px;height:2px;background:#000;"></div>
<div class="t lad" style="right:928px;top:282.5px;color:#808000;font-size:11px;">0</div>
<div class="t lad" style="left:449px;top:300.5px;color:#000;font-size:11px;">Timeout</div>
<div class="a" style="left:440px;top:306px;width:4px;height:2px;background:#000;"></div>
<div class="t lad" style="right:928px;top:300.5px;color:#808000;font-size:11px;">+1000</div>
<div class="t lad" style="right:833px;top:264.5px;color:#000;font-size:11px;">Done</div>
<div class="a" style="left:537px;top:270px;width:4px;height:2px;background:#000;"></div>
<div class="t lad" style="left:544px;top:264.5px;color:#000;font-size:11px;">M20.0</div>
<div class="t lad" style="right:833px;top:282.5px;color:#000;font-size:11px;">Error</div>
<div class="a" style="left:537px;top:288px;width:4px;height:2px;background:#000;"></div>
<div class="t lad" style="left:544px;top:282.5px;color:#000;font-size:11px;">VB100</div>
<div class="t lad" style="left:245px;top:349.5px;color:#000;font-size:12px;font-weight:bold;word-spacing:3px">网络 9</div>
<div class="a" style="left:245px;top:367px;width:600px;height:17px;background:#e3e3e3;border:1px solid #808080"></div>
<div class="t lad" style="left:250px;top:369.5px;color:#008000;font-size:12px;">白棉机</div>
<div class="a" style="left:240px;top:416px;width:33px;height:2px;background:#000;"></div>
<div class="a" style="left:273px;top:407px;width:2px;height:20px;background:#000;"></div>
<div class="a" style="left:304px;top:407px;width:2px;height:20px;background:#000;"></div>
<div class="t lad" style="left:276px;top:392.5px;color:#000;font-size:11px;">M20.1</div>
<div class="a" style="left:306px;top:416px;width:238px;height:2px;background:#000;"></div>
<div class="a" style="left:240px;top:470px;width:33px;height:2px;background:#000;"></div>
<div class="a" style="left:273px;top:461px;width:2px;height:20px;background:#000;"></div>
<div class="a" style="left:304px;top:461px;width:2px;height:20px;background:#000;"></div>
<div class="t lad" style="left:276px;top:446.5px;color:#000;font-size:11px;">M13.4</div>
<div class="a" style="left:306px;top:470px;width:34px;height:2px;background:#000;"></div>
<div class="a" style="left:338px;top:416px;width:2px;height:56px;background:#000;"></div>
<div class="a" style="left:240px;top:524px;width:33px;height:2px;background:#000;"></div>
<div class="a" style="left:273px;top:515px;width:2px;height:20px;background:#000;"></div>
<div class="a" style="left:304px;top:515px;width:2px;height:20px;background:#000;"></div>
<div class="t lad" style="left:276px;top:500.5px;color:#000;font-size:11px;">M20.1</div>
<div class="a" style="left:306px;top:524px;width:67px;height:2px;background:#000;"></div>
<div class="a" style="left:373px;top:515px;width:2px;height:20px;background:#000;"></div>
<div class="a" style="left:404px;top:515px;width:2px;height:20px;background:#000;"></div>
<div class="t lad" style="left:288px;width:200px;text-align:center;top:518.5px;color:#000;font-size:11px;">P</div>
<div class="a" style="left:406px;top:524px;width:138px;height:2px;background:#000;"></div>
<div class="a" style="left:240px;top:578px;width:33px;height:2px;background:#000;"></div>
<div class="a" style="left:273px;top:569px;width:2px;height:20px;background:#000;"></div>
<div class="a" style="left:304px;top:569px;width:2px;height:20px;background:#000;"></div>
<div class="t lad" style="left:276px;top:554.5px;color:#000;font-size:11px;">M13.4</div>
<div class="a" style="left:306px;top:578px;width:67px;height:2px;background:#000;"></div>
<div class="a" style="left:373px;top:569px;width:2px;height:20px;background:#000;"></div>
<div class="a" style="left:404px;top:569px;width:2px;height:20px;background:#000;"></div>
<div class="t lad" style="left:288px;width:200px;text-align:center;top:572.5px;color:#000;font-size:11px;">P</div>
<div class="a" style="left:406px;top:578px;width:34px;height:2px;background:#000;"></div>
<div class="a" style="left:438px;top:524px;width:2px;height:56px;background:#000;"></div>
<div class="a" style="left:544px;top:390px;width:93px;height:300px;background:transparent;border:2px solid #000"></div>
<div class="t lad" style="left:490.5px;width:200px;text-align:center;top:392.5px;color:#000;font-size:11px;">MBUS_MSG</div>
<div class="t lad" style="left:549px;top:410.5px;color:#000;font-size:11px;">EN</div>
<div class="t lad" style="left:549px;top:518.5px;color:#000;font-size:11px;">First</div>
<div class="t lad" style="left:549px;top:554.5px;color:#000;font-size:11px;">Slave</div>
<div class="a" style="left:540px;top:560px;width:4px;height:2px;background:#000;"></div>
<div class="t lad" style="right:828px;top:554.5px;color:#808000;font-size:11px;">1</div>
<div class="t lad" style="left:549px;top:572.5px;color:#000;font-size:11px;">RW</div>
<div class="a" style="left:540px;top:578px;width:4px;height:2px;background:#000;"></div>
<div class="t lad" style="right:828px;top:572.5px;color:#808000;font-size:11px;">1</div>
<div class="t lad" style="left:549px;top:590.5px;color:#000;font-size:11px;">Addr</div>
<div class="a" style="left:540px;top:596px;width:4px;height:2px;background:#000;"></div>
<div class="t lad" style="right:828px;top:590.5px;color:#808000;font-size:11px;">48194</div>
<div class="t lad" style="left:549px;top:608.5px;color:#000;font-size:11px;">Count</div>
<div class="a" style="left:540px;top:614px;width:4px;height:2px;background:#000;"></div>
<div class="t lad" style="right:828px;top:608.5px;color:#808000;font-size:11px;">1</div>
<div class="t lad" style="left:549px;top:626.5px;color:#000;font-size:11px;">DataPtr</div>
<div class="a" style="left:540px;top:632px;width:4px;height:2px;background:#000;"></div>
<div class="t lad" style="right:828px;top:626.5px;color:#000;font-size:11px;">&amp;VB200</div>
<div class="t lad" style="right:733px;top:554.5px;color:#000;font-size:11px;">Done</div>
<div class="a" style="left:637px;top:560px;width:4px;height:2px;background:#000;"></div>
<div class="t lad" style="left:644px;top:554.5px;color:#000;font-size:11px;">M20.2</div>
<div class="t lad" style="right:733px;top:572.5px;color:#000;font-size:11px;">Error</div>
<div class="a" style="left:637px;top:578px;width:4px;height:2px;background:#000;"></div>
<div class="t lad" style="left:644px;top:572.5px;color:#000;font-size:11px;">VB100</div>
</div></div>
<div class="a" style="left:1285px;top:136px;width:17px;height:496px;background:repeating-conic-gradient(#e6e6e6 0 25%,#ffffff 0 50%) 0 0/2px 2px;"></div>
<div class="a" style="left:1285px;top:136px;width:17px;height:16px;background:#f0f0f0;border:1px solid #fff;border-right-color:#696969;border-bottom-color:#696969;box-shadow:inset -1px -1px #a0a0a0"></div>
<svg style="left:1289px;top:141px" width="9" height="6"><path d="M4.5 0 L9 5 L0 5Z" fill="#000"/></svg>
<div class="a" style="left:1285px;top:168px;width:17px;height:8px;background:#f0f0f0;border:1px solid #fff;border-right-color:#696969;border-bottom-color:#696969;box-shadow:inset -1px -1px #a0a0a0"></div>
<div class="a" style="left:1285px;top:616px;width:17px;height:16px;background:#f0f0f0;border:1px solid #fff;border-right-color:#696969;border-bottom-color:#696969;box-shadow:inset -1px -1px #a0a0a0"></div>
<svg style="left:1289px;top:622px" width="9" height="6"><path d="M0 0 L9 0 L4.5 5Z" fill="#000"/></svg>
<div class="a" style="left:217px;top:632px;width:543px;height:17px;background:#c0c0c0;"></div>
<div class="a" style="left:217px;top:632px;width:70px;height:1px;background:#606060;"></div>
<div class="a" style="left:219px;top:633px;width:17px;height:15px;background:#f0f0f0;border:1px solid #fff;border-right-color:#696969;border-bottom-color:#696969"></div>
<div class="a" style="left:236px;top:633px;width:17px;height:15px;background:#f0f0f0;border:1px solid #fff;border-right-color:#696969;border-bottom-color:#696969"></div>
<div class="a" style="left:253px;top:633px;width:17px;height:15px;background:#f0f0f0;border:1px solid #fff;border-right-color:#696969;border-bottom-color:#696969"></div>
<div class="a" style="left:270px;top:633px;width:17px;height:15px;background:#f0f0f0;border:1px solid #fff;border-right-color:#696969;border-bottom-color:#696969"></div>
<div class="a" style="left:218px;top:648px;width:70px;height:1px;background:#000;"></div>
<svg style="left:222px;top:636px" width="64" height="10" shape-rendering="crispEdges"><rect x="1" y="1" width="1" height="7" fill="#606060"/><path d="M7 1 V8 L3 4.5Z" fill="#606060"/><path d="M24 1 V8 L20 4.5Z" fill="#606060"/><path d="M36 1 V8 L40 4.5Z" fill="#606060"/><path d="M52 1 V8 L56 4.5Z" fill="#606060"/><rect x="57" y="1" width="1" height="7" fill="#606060"/></svg>
<svg style="left:217px;top:632px" width="543" height="18"><path d="M462.5 0.5 H534.5 L528.0 16.5 H469.0 Z" fill="#ececec"/><path d="M469.0 16.5 L462.5 0.5 M534.5 0.5 L528.0 16.5" stroke="#000" fill="none" stroke-width="1.1"/><path d="M469.0 16.5 H528.0" stroke="#a0a0a0"/><path d="M395.5 0.5 H468.5 L462.0 16.5 H402.0 Z" fill="#ececec"/><path d="M402.0 16.5 L395.5 0.5 M468.5 0.5 L462.0 16.5" stroke="#000" fill="none" stroke-width="1.1"/><path d="M402.0 16.5 H462.0" stroke="#a0a0a0"/><path d="M312.5 0.5 H401.5 L395.0 16.5 H319.0 Z" fill="#ececec"/><path d="M319.0 16.5 L312.5 0.5 M401.5 0.5 L395.0 16.5" stroke="#000" fill="none" stroke-width="1.1"/><path d="M319.0 16.5 H395.0" stroke="#a0a0a0"/><path d="M225 0.5 H318.5 L312.0 16.5 H231.5 Z" fill="#ececec"/><path d="M231.5 16.5 L225 0.5 M318.5 0.5 L312.0 16.5" stroke="#000" fill="none" stroke-width="1.1"/><path d="M231.5 16.5 H312.0" stroke="#a0a0a0"/><path d="M177 0.5 H231 L224.5 16.5 H183.5 Z" fill="#ececec"/><path d="M183.5 16.5 L177 0.5 M231 0.5 L224.5 16.5" stroke="#000" fill="none" stroke-width="1.1"/><path d="M183.5 16.5 H224.5" stroke="#a0a0a0"/><path d="M124 0.5 H183 L176.5 16.5 H130.5 Z" fill="#ececec"/><path d="M130.5 16.5 L124 0.5 M183 0.5 L176.5 16.5" stroke="#000" fill="none" stroke-width="1.1"/><path d="M130.5 16.5 H176.5" stroke="#a0a0a0"/><path d="M71 0 L77.5 16.5 H123.5 L130 0Z" fill="#fff"/><path d="M71 0 L77.5 16.5 M130 0 L123.5 16.5" stroke="#000" fill="none" stroke-width="1.1"/><path d="M77.5 16.5 H123.5" stroke="#a0a0a0"/></svg>
<div class="a" style="left:347px;top:632px;width:413px;height:1px;background:#000;"></div>
<div class="a" style="left:759px;top:632px;width:1px;height:17px;background:#000;"></div>
<div class="t" style="left:298px;top:636px;font-size:12px;font-weight:bold;letter-spacing:0.5px">主程序</div>
<div class="t" style="left:353px;top:636px;font-size:11.5px;">SBR_0</div>
<div class="t" style="left:406px;top:636px;font-size:11.5px;">INT_0</div>
<div class="t" style="left:457px;top:636px;font-size:11.5px;">MBUS_CTRL</div>
<div class="t" style="left:544px;top:636px;font-size:11.5px;">MBUS_MSG</div>
<div class="t" style="left:626px;top:636px;font-size:11.5px;">MBUSM1</div>
<div class="t" style="left:692px;top:636px;font-size:11.5px;">MBUSM2</div>
<div class="a" style="left:760px;top:632px;width:525px;height:17px;background:repeating-conic-gradient(#e6e6e6 0 25%,#ffffff 0 50%) 0 0/2px 2px;"></div>
<div class="a" style="left:761px;top:632px;width:17px;height:16px;background:#f0f0f0;border:1px solid #fff;border-right-color:#696969;border-bottom-color:#696969;box-shadow:inset -1px -1px #a0a0a0"></div>
<svg style="left:766px;top:636px" width="5" height="9"><path d="M4 0 V8 L0 4Z" fill="#000"/></svg>
<div class="a" style="left:778px;top:632px;width:162px;height:16px;background:#f0f0f0;border:1px solid #fff;border-right-color:#696969;border-bottom-color:#696969;box-shadow:inset -1px -1px #a0a0a0"></div>
<div class="a" style="left:1269px;top:632px;width:17px;height:16px;background:#f0f0f0;border:1px solid #fff;border-right-color:#696969;border-bottom-color:#696969;box-shadow:inset -1px -1px #a0a0a0"></div>
<svg style="left:1275px;top:636px" width="5" height="9"><path d="M0 0 V8 L4 4Z" fill="#000"/></svg>
<div class="a" style="left:0px;top:650px;width:1305px;height:1px;background:#fff;"></div>
<div class="a" style="left:0px;top:654px;width:1305px;height:1px;background:#a0a0a0;"></div>
<div class="a" style="left:0px;top:655px;width:1305px;height:1px;background:#696969;"></div>
<div class="a" style="left:4px;top:659px;width:1297px;height:84px;border:1px solid #a0a0a0;border-right-color:#fff;border-bottom-color:#fff;background:#fff"></div>
<div class="a" style="left:5px;top:660px;width:1295px;height:82px;border:1px solid #696969;border-right-color:#e3e3e3;border-bottom-color:#e3e3e3;background:#fff"></div>
<div class="a" style="left:0px;top:746px;width:1305px;height:1px;background:#a0a0a0;"></div>
<div class="a" style="left:0px;top:747px;width:1305px;height:1px;background:#fff;"></div>
<div class="t" style="left:2px;top:753px;font-size:12px;">就绪</div>
<div class="a" style="left:1056px;top:750px;width:106px;height:18px;border:1px solid #a0a0a0;border-right-color:#fff;border-bottom:none"></div>
<div class="t" style="left:1059px;top:753px;font-size:12px;">网络 1</div>
<div class="a" style="left:1165px;top:750px;width:105px;height:18px;border:1px solid #a0a0a0;border-right-color:#fff;border-bottom:none"></div>
<div class="t" style="left:1168px;top:753px;font-size:12px;">行 1, 列 1</div>
<div class="a" style="left:1273px;top:750px;width:31px;height:18px;border:1px solid #a0a0a0;border-bottom:none;border-right:none"></div>
<div class="t" style="left:1275px;top:753px;font-size:12px;">INS</div>
<div class="a" style="left:1305px;top:0px;width:61px;height:768px;background:linear-gradient(#0a2456 0,#0b2960 25%,#0d2f6c 45%,#0e3372 62%,#0d3070 68%,#0a2658 73%,#08214d 78%,#08224f 100%);"></div>
<svg style="left:0px;top:2px" width="17" height="18" viewBox="0 0 17 18"><rect x="0.5" y="1.5" width="13" height="13" fill="#fff" stroke="#a0a0a0"/><rect x="1" y="2" width="12" height="2" fill="#000080"/><rect x="3.5" y="6.5" width="12" height="11" fill="#808080" stroke="#000"/><rect x="4" y="7" width="3" height="10" fill="#000"/><rect x="5" y="8" width="1" height="1" fill="#0f0"/><rect x="5" y="10" width="1" height="1" fill="#ff0"/><rect x="8" y="8" width="1" height="1" fill="#0f0"/><rect x="11" y="8" width="1" height="1" fill="#0f0"/><rect x="8" y="11" width="1" height="1" fill="#0f0"/><rect x="11" y="11" width="1" height="1" fill="#0f0"/></svg>
<div class="a" style="left:1197px;top:-3px;width:105px;height:21px;border:1px solid #2a3a5a;border-radius:0 0 5px 5px;overflow:hidden;background:linear-gradient(#aebdd6 0,#9aaecb 45%,#3f5f90 50%,#4a6a9c 100%)"></div>
<div class="a" style="left:1226px;top:0px;width:1px;height:17px;background:#2a3a5a;"></div>
<div class="a" style="left:1253px;top:0px;width:1px;height:17px;background:#2a3a5a;"></div>
<div class="a" style="left:1254px;top:-2px;width:47px;height:19px;background:linear-gradient(#e4a49a 0,#d98a7c 45%,#b83a22 50%,#c85a3a 100%);border-radius:0 0 5px 0"></div>
<div class="a" style="left:1207px;top:8px;width:12px;height:5px;background:#fff;border:1px solid #404a5a"></div>
<svg style="left:1233px;top:2px" width="14" height="13"><rect x="4.5" y="1.5" width="8" height="8" fill="none" stroke="#404a5a" stroke-width="2.2"/><rect x="4.5" y="1.5" width="8" height="8" fill="none" stroke="#fff" stroke-width="1"/><rect x="1.5" y="4.5" width="8" height="8" fill="#7d8fb0" stroke="#404a5a" stroke-width="2.2"/><rect x="1.5" y="4.5" width="8" height="8" fill="none" stroke="#fff" stroke-width="1"/><rect x="4" y="7" width="3" height="3" fill="#4a6a9c"/></svg>
<svg style="left:1271px;top:2px" width="14" height="13"><path d="M2 2 L12 11 M12 2 L2 11" stroke="#404040" stroke-width="4"/><path d="M2 2 L12 11 M12 2 L2 11" stroke="#fff" stroke-width="2.3"/></svg>
<svg style="left:7px;top:23px" width="17" height="17" viewBox="0 0 17 17"><path d="M1.5 1.5 H10 L14.5 6 V13.5 H1.5Z" fill="#fff" stroke="#000" stroke-width="1.3"/><path d="M4 5 H6 M4 9 H6 M6 5 V9 M8 7 H11" stroke="#404040"/><circle cx="5" cy="3" r="0.8" fill="#ff0"/><circle cx="3" cy="8" r="0.8" fill="#ff0"/><circle cx="9" cy="6" r="0.8" fill="#ff0"/><circle cx="12" cy="10" r="0.8" fill="#ff0"/><path d="M9 9 L14 14" stroke="#404040" stroke-width="1.5"/><circle cx="14" cy="14" r="1.8" fill="#c00000"/><circle cx="14" cy="14" r="0.8" fill="#ff0"/></svg>
<div class="a" style="left:1247px;top:23px;width:18px;height:18px;background:linear-gradient(#eef3fa,#dce7f5);border:1px solid #b9c9de"></div>
<div class="a" style="left:1266px;top:23px;width:18px;height:18px;background:linear-gradient(#eef3fa,#dce7f5);border:1px solid #b9c9de"></div>
<div class="a" style="left:1285px;top:23px;width:18px;height:18px;background:linear-gradient(#eef3fa,#dce7f5);border:1px solid #b9c9de"></div>
<svg style="left:1247px;top:23px" width="56" height="18"><rect x="6" y="11" width="7" height="2" fill="#5a6a80"/><rect x="25.5" y="5.5" width="6" height="5" fill="none" stroke="#5a6a80"/><rect x="22.5" y="8.5" width="6" height="5" fill="#dce7f5" stroke="#5a6a80" stroke-width="1"/><path d="M23 9 H28" stroke="#5a6a80" stroke-width="1.5"/><path d="M43 5 L50 12 M50 5 L43 12" stroke="#5a6a80" stroke-width="1.8"/></svg>
<div class="a" style="left:1170px;top:47px;width:98px;height:39px;border-radius:20px;border:1px solid #b8b8b8;background:linear-gradient(#fbfbfb,#ebebeb);box-shadow:1px 2px 3px rgba(0,0,0,0.25)"></div>
<div class="a" style="left:1141px;top:42px;width:49px;height:49px;border-radius:50%;background:#f4f4f4;border:1px solid #c8c8c8;box-shadow:1px 2px 3px rgba(0,0,0,0.3)"></div>
<div class="a" style="left:1144px;top:45px;width:43px;height:43px;border-radius:50%;overflow:hidden;background:linear-gradient(#0d7a45 0,#157f4a 55%,#47c463 55%,#3bbd59 100%)"></div>
<div class="a" style="left:1153px;top:48px;width:25px;height:10px;border-radius:50%;background:radial-gradient(rgba(255,255,255,0.45),rgba(255,255,255,0))"></div>
<div class="t" style="left:1149px;top:58px;font-size:14.5px;color:#fff;letter-spacing:0px">44%</div>
<svg style="left:1193px;top:56px" width="8" height="22"><path d="M4 0 L8 4 H5 V7.5 H3 V4 H0Z" fill="#e8573a"/><path d="M3 14 H5 V18 H8 L4 22 L0 18 H3Z" fill="#1e9a4a"/></svg>
<div class="t" style="left:1220px;top:54px;font-size:11px;color:#000">0K/s</div>
<div class="t" style="left:1220px;top:68px;font-size:11px;color:#000">0K/s</div>
<div class="a" style="left:1243px;top:57px;width:20px;height:20px;border-radius:50%;background:#e4e4e4"></div>
<div class="a" style="left:1245px;top:59px;width:16px;height:16px;border-radius:50%;background:#3b80d8"></div>
<svg style="left:1248px;top:62px" width="10" height="10"><path d="M5 1 V9 M1 5 H9" stroke="#fff" stroke-width="2"/></svg>
<div class="a" style="left:1255px;top:57px;width:8px;height:8px;border-radius:50%;background:#d93030"></div>
<div class="a" style="left:1303px;top:22px;width:1px;height:746px;background:#fff;"></div>
<div class="a" style="left:1304px;top:0px;width:1px;height:768px;background:#1a2a48;"></div>
<div class="a" style="left:1305px;top:0px;width:1px;height:768px;background:#8aa4cc;"></div>
<div class="a" style="left:1306px;top:0px;width:8px;height:768px;background:linear-gradient(90deg,rgba(40,90,160,0.8),rgba(40,90,160,0));"></div>
<div class="a" style="left:1316px;top:9px;width:38px;height:38px;border-radius:50%;border:1px solid #7a94b8;background:radial-gradient(circle at 50% 85%,#38c8f0 0,#1a6aa8 35%,#0e3c70 60%,#1e3e68 100%)"></div>
<div class="a" style="left:1319px;top:11px;width:32px;height:16px;border-radius:16px 16px 6px 6px;background:linear-gradient(rgba(255,255,255,0.45),rgba(255,255,255,0.08))"></div>
<svg style="left:1325px;top:17px" width="20" height="20" viewBox="0 0 20 20"><path d="M1 3 Q4 1 9 3 V9 Q5 7 1 9Z" fill="#f05a28"/><path d="M10 3.5 Q14 5 19 2.5 V8.5 Q15 10.5 10 9Z" fill="#7cbb3a"/><path d="M0.5 10 Q4 8.5 9 10 V16 Q5 14 0.5 16Z" fill="#1fa0e0"/><path d="M10 10 Q14 11.5 18.5 9.5 V15.5 Q14 17.5 10 16Z" fill="#fcbc1a"/></svg>
<div class="a" style="left:1305px;top:63px;width:60px;height:44px;border:1px solid #6d83a8;border-radius:3px;background:linear-gradient(160deg,#8fa2c2 0,#5a74a0 35%,#27457c 55%,#1b3a72 100%)"></div>
<svg style="left:1319px;top:67px" width="34" height="38" viewBox="0 0 34 38"><defs><radialGradient id="ieg" cx="0.35" cy="0.3" r="0.8"><stop offset="0" stop-color="#a8ee60"/><stop offset="0.6" stop-color="#4cc02c"/><stop offset="1" stop-color="#30a020"/></radialGradient></defs><circle cx="16" cy="18" r="14" fill="#fff"/><circle cx="16" cy="18" r="12.3" fill="url(#ieg)"/><path d="M10.5 15.5 Q12 10.5 16 10.5 Q20 10.5 21.5 15.5Z" fill="#fff"/><path d="M10.5 20.5 H28.3 Q26.5 23 24 24 Q20 25 16.5 24.5 Q12 23.5 10.5 20.5Z" fill="#fff"/><path d="M7 35 Q2 24 10 14 Q18 4 30 4 Q24 6 18 10 Q9 17 7 35Z" fill="#44c030"/></svg>
<div class="a" style="left:1319px;top:117px;width:32px;height:32px;border-radius:7px;background:#fff"></div>
<svg style="left:1322px;top:120px" width="26" height="26" viewBox="0 0 26 26"><circle cx="13" cy="8" r="4.5" fill="none" stroke="#2e7cf0" stroke-width="3"/><circle cx="7.5" cy="15" r="4.5" fill="none" stroke="#2e7cf0" stroke-width="3"/><circle cx="18.5" cy="15" r="4.5" fill="none" stroke="#2e7cf0" stroke-width="3"/><path d="M10 10 L12 13" stroke="#e83a3a" stroke-width="2.5"/><rect x="8" y="24" width="5" height="2" fill="#e83a3a"/><rect x="13" y="24" width="5" height="2" fill="#2e7cf0"/></svg>
<div class="a" style="left:1305px;top:159px;width:60px;height:44px;border:1px solid #a8b8d0;border-radius:3px;background:linear-gradient(160deg,#b8c6dc 0,#8ea2c2 40%,#6680aa 60%,#7f95b8 100%)"></div>
<svg style="left:1319px;top:165px" width="30" height="30" viewBox="0 0 30 30"><rect x="0.5" y="0.5" width="27" height="27" fill="#fff" stroke="#909090"/><rect x="2" y="2" width="24" height="4" fill="#0000ff"/><rect x="3" y="3" width="3" height="1" fill="#fff"/><path d="M2 11 H6 M5 9 V13 M7 9 V13 M2 15 H6 M5 13 V17 M7 13 V17" stroke="#000"/><rect x="9.5" y="11.5" width="20" height="17" fill="#808080" stroke="#000" stroke-width="1.5"/><rect x="10" y="12" width="4" height="16" fill="#404040"/><rect x="11" y="14" width="1" height="1" fill="#0f0"/><rect x="11" y="17" width="1" height="1" fill="#ff0"/><path d="M16 14.5 H26 M16 24.5 H26" stroke="#0f0" stroke-dasharray="1 2"/><rect x="25" y="17" width="3" height="6" fill="#c0c0c0"/><rect x="16" y="9" width="6" height="3" fill="#fff" stroke="#000"/></svg>
<div class="t" style="left:1318px;top:579px;font-size:11px;color:#fff;font-family:Liberation Mono">CH</div>
<svg style="left:1338px;top:577px" width="17" height="13" viewBox="0 0 17 13"><rect x="0.5" y="4.5" width="16" height="8" rx="1" fill="#d0d4dc" stroke="#8a96a8"/><path d="M3 7.5 H14 M3 9.5 H14" stroke="#8a96a8" stroke-dasharray="1 1"/><path d="M8 4 Q10 0 15 1" stroke="#c0c8d4" fill="none"/></svg>
<div class="a" style="left:1316px;top:601px;width:16px;height:16px;border-radius:50%;background:radial-gradient(circle at 45% 35%,#5a8cf0,#1a2aa8 70%);border:1px solid #c0c8e0"></div>
<div class="t" style="left:1320px;top:603px;font-size:12px;color:#fff;font-weight:bold">?</div>
<svg style="left:1341px;top:598px" width="12" height="20" viewBox="0 0 12 20"><rect x="3.5" y="0.5" width="6" height="4" fill="none" stroke="#fff"/><rect x="0.5" y="3.5" width="6" height="4" fill="#0c2654" stroke="#fff"/><path d="M2 15 H9 L5.5 18Z" fill="#fff"/></svg>
<svg style="left:1314px;top:632px" width="6" height="8" viewBox="0 0 6 8"><path d="M5 0 V7 L0 3.5Z" fill="#fff"/></svg>
<svg style="left:1335px;top:625px" width="18" height="18" viewBox="0 0 18 18"><rect x="2.5" y="6.5" width="9" height="7" fill="#40a0c0" stroke="#fff"/><rect x="1" y="15" width="12" height="2" fill="#fff"/><rect x="10.5" y="0.5" width="6" height="9" fill="#404040" stroke="#fff"/></svg>
<svg style="left:1313px;top:651px" width="15" height="13" viewBox="0 0 15 13"><rect x="0" y="10" width="2" height="3" fill="#fff"/><rect x="3" y="8" width="2" height="5" fill="#fff"/><rect x="6" y="5" width="2" height="8" fill="#fff"/><rect x="9" y="2" width="2" height="11" fill="#fff"/><rect x="12" y="0" width="2" height="13" fill="#5a6a88"/></svg>
<svg style="left:1339px;top:650px" width="11" height="16" viewBox="0 0 11 16"><rect x="3" y="0" width="5" height="2" fill="#fff"/><rect x="0.75" y="1.75" width="9.5" height="13.5" rx="1.5" fill="none" stroke="#fff" stroke-width="1.5"/><rect x="2" y="8" width="7" height="6" fill="#fff"/></svg>
<svg style="left:1311px;top:674px" width="18" height="17" viewBox="0 0 18 17"><path d="M1 5 H4 L9 1 V15 L4 11 H1Z" fill="#e8e8e8"/><circle cx="12" cy="11" r="5" fill="#e02020" stroke="#fff"/><path d="M9 8 L15 14" stroke="#fff" stroke-width="1.5"/></svg>
<div class="t" style="left:1320px;top:699px;font-size:12.5px;color:#fff">10:10</div>
<div class="t" style="left:1317px;top:718px;font-size:12.5px;color:#fff">星期日</div>
<div class="t" style="left:1310px;top:737px;font-size:12.5px;color:#fff">2018/4/1</div>
<div class="a" style="left:1305px;top:753px;width:60px;height:15px;border:1px solid #5a6f98;border-radius:2px;background:linear-gradient(170deg,#5c74a2 0,#22407a 40%,#0f2c64 100%)"></div>
</body></html>
